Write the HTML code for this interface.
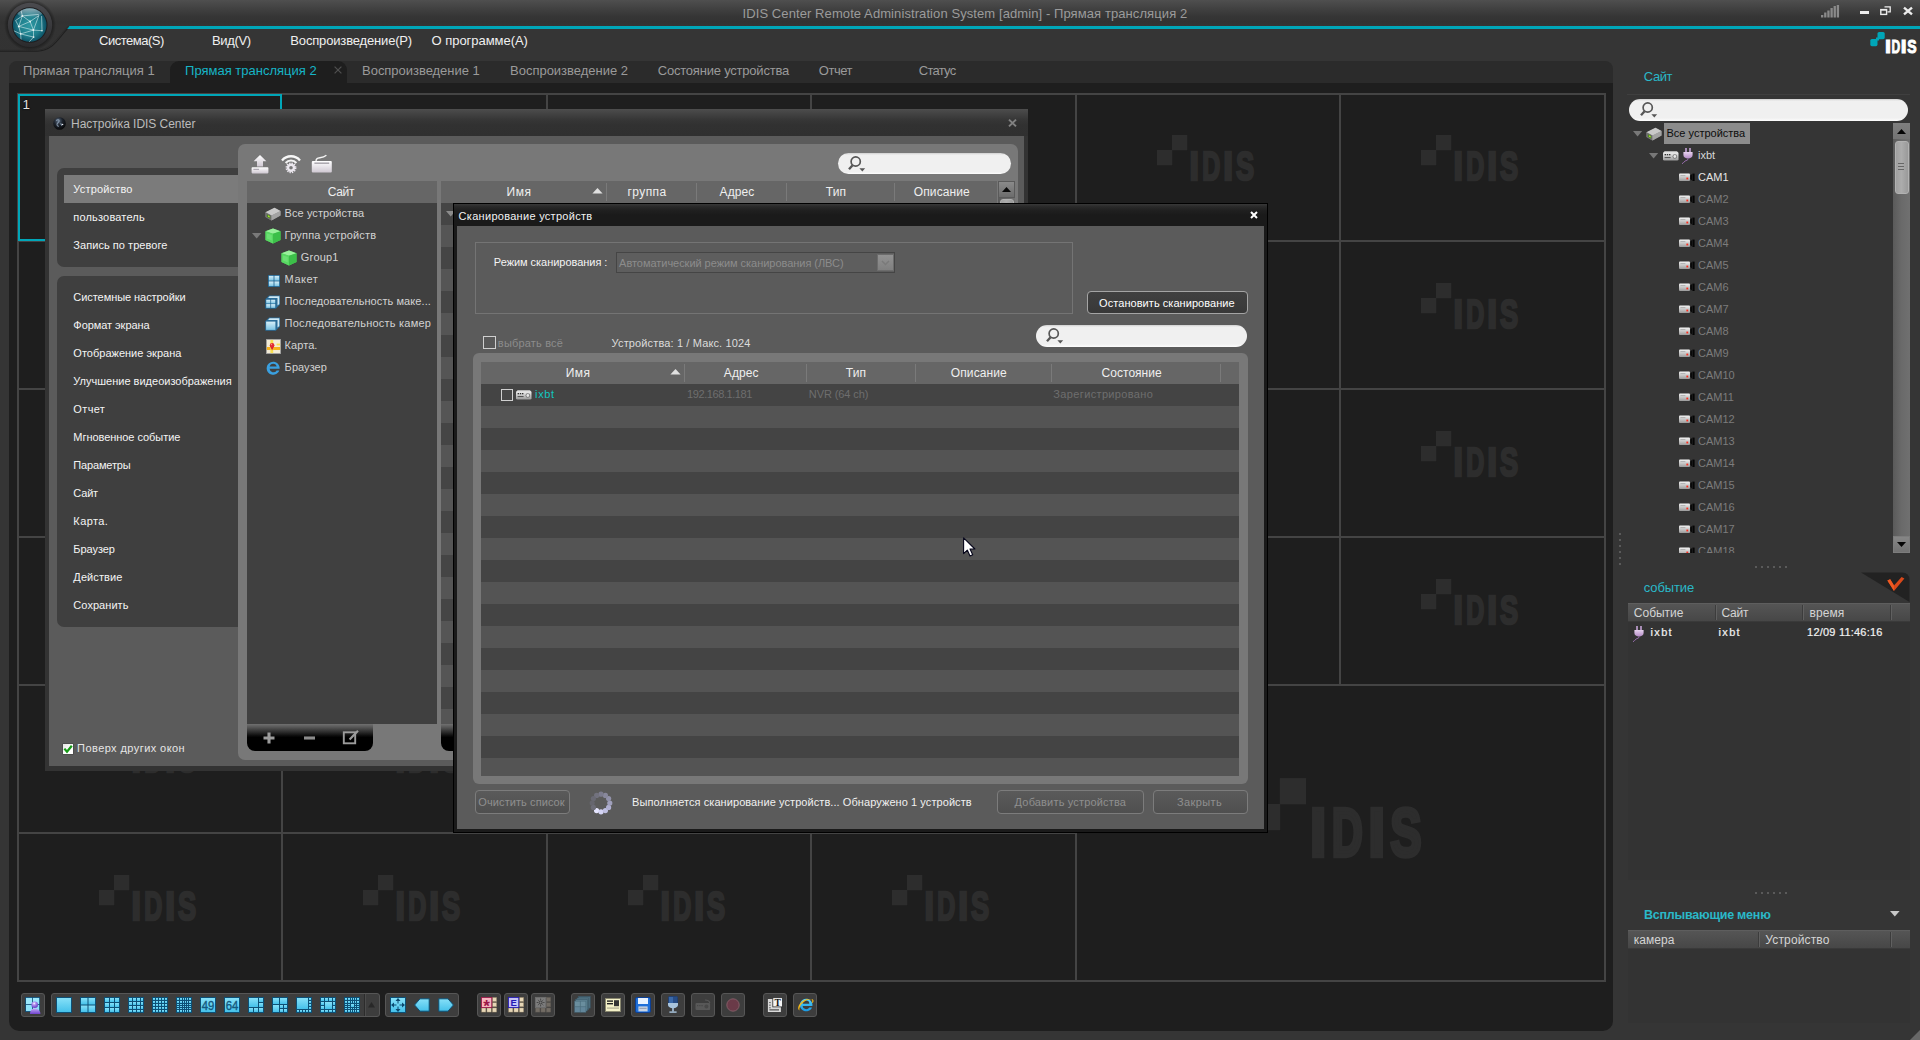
<!DOCTYPE html>
<html lang="ru"><head><meta charset="utf-8"><title>IDIS Center Remote Administration System</title>
<style>
*{box-sizing:border-box;margin:0;padding:0}
html,body{width:1920px;height:1040px;overflow:hidden}
body{background:#353535;font-family:"Liberation Sans",sans-serif;font-size:11px;color:#e6e6e6;position:relative}
.t{position:absolute;white-space:nowrap;line-height:16px;height:16px}
svg{overflow:visible}

</style></head>
<body>
<svg width="0" height="0" style="position:absolute"><defs>
<linearGradient id="gCy" x1="0" y1="0" x2="0" y2="1"><stop offset="0" stop-color="#86e0f8"/><stop offset="1" stop-color="#45c1ea"/></linearGradient>
<linearGradient id="gGrn" x1="0" y1="0" x2="0" y2="1"><stop offset="0" stop-color="#8df08f"/><stop offset="1" stop-color="#3fc94a"/></linearGradient>
<linearGradient id="gGry" x1="0" y1="0" x2="0" y2="1"><stop offset="0" stop-color="#f4f4f4"/><stop offset="1" stop-color="#9a9a9a"/></linearGradient>
<linearGradient id="gWh" x1="0" y1="0" x2="0" y2="1"><stop offset="0" stop-color="#ffffff"/><stop offset="1" stop-color="#cfc8d2"/></linearGradient>
<linearGradient id="gPur" x1="0" y1="0" x2="0" y2="1"><stop offset="0" stop-color="#e6d2ee"/><stop offset="1" stop-color="#b48ac6"/></linearGradient>
<linearGradient id="gBlu" x1="0" y1="0" x2="0" y2="1"><stop offset="0" stop-color="#d6eef8"/><stop offset="1" stop-color="#7cc4e4"/></linearGradient>
<radialGradient id="gOrb" cx="0.45" cy="0.35" r="0.7"><stop offset="0" stop-color="#4fb6c2"/><stop offset="0.55" stop-color="#1c8796"/><stop offset="1" stop-color="#0a4a58"/></radialGradient>
<radialGradient id="gRing" cx="0.5" cy="0.5" r="0.5"><stop offset="0.7" stop-color="#161616"/><stop offset="0.86" stop-color="#2a2a2a"/><stop offset="0.95" stop-color="#4a4a4a"/><stop offset="1" stop-color="#3a3a3a"/></radialGradient>
</defs></svg>
<div style="position:absolute;left:0px;top:0px;width:1920px;height:26px;background:linear-gradient(#4f4f4f 0%,#424242 30%,#363636 62%,#323232 85%,#353535 100%)"></div>
<svg style="position:absolute;left:0px;top:0px;" width="80" height="60" viewBox="0 0 80 60"><defs><linearGradient id="gPod" x1="0" y1="0" x2="0" y2="60" gradientUnits="userSpaceOnUse"><stop offset="0" stop-color="#4f4f4f"/><stop offset="0.13" stop-color="#424242"/><stop offset="0.27" stop-color="#363636"/><stop offset="0.37" stop-color="#323232"/><stop offset="0.433" stop-color="#333333"/><stop offset="1" stop-color="#323232"/></linearGradient></defs>
<path d="M0 0 H80 V26 H70 C59 36 55 50 37 51 H0 Z" fill="url(#gPod)"/>
<path d="M0 51.3 H37 C55 50.3 59 36.3 69.6 26.6" fill="none" stroke="#1f1f1f" stroke-width="1.1"/>
<path d="M0 50.3 H37 C54 49.3 58 35.3 68.6 26" fill="none" stroke="#2b2b2b" stroke-width="1"/></svg>
<svg style="position:absolute;left:60px;top:26px;" width="1860" height="3" viewBox="0 0 1860 3"><polygon points="9.5,0 1860,0 1860,3 7.2,3" fill="#00a6b8"/></svg>
<div class="t" style="left:742.54px;top:5.5px;font-size:13px;color:#9b9b9b;letter-spacing:0.087px;">IDIS Center Remote Administration System [admin] - Прямая трансляция 2</div>
<svg style="position:absolute;left:4px;top:-1px;" width="52" height="52" viewBox="0 0 52 52"><defs>
<radialGradient id="gSh" cx="0.5" cy="0.5" r="0.5"><stop offset="0.8" stop-color="#000" stop-opacity="0.5"/><stop offset="1" stop-color="#000" stop-opacity="0"/></radialGradient>
<linearGradient id="gRg" x1="0" y1="0" x2="0" y2="1"><stop offset="0" stop-color="#4b4b4f"/><stop offset="0.5" stop-color="#3a3a3d"/><stop offset="1" stop-color="#2b2b2d"/></linearGradient>
<radialGradient id="gGl" cx="0.5" cy="0.52" r="0.52"><stop offset="0" stop-color="#2f99a3"/><stop offset="0.6" stop-color="#1f7f8d"/><stop offset="1" stop-color="#0a4c61"/></radialGradient>
<linearGradient id="gHi" x1="0" y1="0" x2="0" y2="1"><stop offset="0" stop-color="#fff" stop-opacity="0.62"/><stop offset="1" stop-color="#fff" stop-opacity="0"/></linearGradient>
<clipPath id="cGl"><circle cx="25.7" cy="26" r="16.8"/></clipPath></defs>
<circle cx="26" cy="26" r="26" fill="url(#gSh)"/>
<circle cx="26" cy="25.9" r="22.2" fill="url(#gRg)"/>
<circle cx="25.7" cy="26" r="17.8" fill="#1d1d1f"/>
<circle cx="25.7" cy="26" r="16.8" fill="url(#gGl)"/>
<g clip-path="url(#cGl)"><g stroke="#d6ecee" stroke-width="0.75" fill="none" opacity="0.8" transform="translate(-4,1)">
<path d="M22.3 15.9 L30.1 21.5 L38.8 15.6 M22.3 15.9 L18.8 26.4 L30.1 21.5 L33.4 30.1 L38.8 15.6 M18.8 26.4 L33.4 30.1 L42 30.7 M33.4 30.1 L33.6 37.1 M20.7 33.9 L33.4 30.1 M20.7 33.9 L33.6 37.1 L29 42 M15.6 20.5 L22.3 15.9 L38.8 14.4 M15.6 20.5 L18.8 26.4 L20.7 33.9 L21 40 M41.6 16 L42 30.7 M12 30 L20.7 33.9 M22.3 15.9 L21 10"/>
</g><g fill="#eef8f8" opacity="0.9" transform="translate(-4,1)"><circle cx="22.3" cy="15.9" r="0.9"/><circle cx="30.1" cy="21.5" r="0.9"/><circle cx="18.8" cy="26.4" r="1"/><circle cx="33.4" cy="30.1" r="1"/><circle cx="42" cy="30.7" r="0.8"/><circle cx="20.7" cy="33.9" r="0.8"/><circle cx="33.6" cy="37.1" r="0.9"/></g>
<ellipse cx="25.7" cy="13.5" rx="12.5" ry="5.6" fill="url(#gHi)"/></g></svg>
<svg style="position:absolute;left:1821px;top:5px;" width="20" height="13" viewBox="0 0 20 13"><rect x="0.00" y="10.00" width="2.3" height="2.5" fill="#8a8a8a"/><rect x="3.15" y="7.50" width="2.3" height="5" fill="#8a8a8a"/><rect x="6.30" y="5.50" width="2.3" height="7" fill="#8a8a8a"/><rect x="9.45" y="3.00" width="2.3" height="9.5" fill="#8a8a8a"/><rect x="12.60" y="1.00" width="2.3" height="11.5" fill="#8a8a8a"/><rect x="15.75" y="0.00" width="2.3" height="12.5" fill="#8a8a8a"/></svg>
<div style="position:absolute;left:1860px;top:11px;width:9px;height:3px;background:#ececec"></div>
<svg style="position:absolute;left:1880px;top:6px;" width="12" height="10" viewBox="0 0 12 10"><path d="M4.5 0.8 H10.2 V5.8 H7.5" fill="none" stroke="#ececec" stroke-width="1.3"/><rect x="0.8" y="3.6" width="5.8" height="4.8" fill="none" stroke="#ececec" stroke-width="1.4"/><rect x="0.8" y="3.2" width="5.8" height="1.4" fill="#ececec"/></svg>
<svg style="position:absolute;left:1903px;top:7px;" width="10" height="8" viewBox="0 0 10 8"><path d="M1 0.6 L9 7.4 M9 0.6 L1 7.4" stroke="#ececec" stroke-width="2.4"/></svg>
<svg style="position:absolute;left:1869px;top:31px;" width="50" height="24" viewBox="0 0 50 24"><rect x="8.5" y="1" width="7.2" height="7.2" rx="1.6" fill="#00a6b8"/><rect x="1.3" y="8" width="7.2" height="7.2" rx="1.6" fill="#00a6b8"/><rect x="7" y="6.5" width="3" height="3" fill="#00a6b8"/>
<text x="15.96" y="21.5" font-family="Liberation Sans, sans-serif" font-weight="bold" font-size="19" fill="#fff" stroke="#fff" stroke-width="1.0" textLength="5.98" lengthAdjust="spacingAndGlyphs">I</text><text x="22.59" y="21.5" font-family="Liberation Sans, sans-serif" font-weight="bold" font-size="19" fill="#fff" stroke="#fff" stroke-width="1.0" textLength="8.71" lengthAdjust="spacingAndGlyphs">D</text><text x="31.71" y="21.5" font-family="Liberation Sans, sans-serif" font-weight="bold" font-size="19" fill="#fff" stroke="#fff" stroke-width="1.0" textLength="5.79" lengthAdjust="spacingAndGlyphs">I</text><text x="38.30" y="21.5" font-family="Liberation Sans, sans-serif" font-weight="bold" font-size="19" fill="#fff" stroke="#fff" stroke-width="1.0" textLength="9.35" lengthAdjust="spacingAndGlyphs">S</text></svg>
<div class="t" style="left:99.05px;top:33px;font-size:13px;color:#f0f0f0;letter-spacing:-0.503px;">Система(S)</div>
<div class="t" style="left:212.04px;top:33px;font-size:13px;color:#f0f0f0;letter-spacing:-0.338px;">Вид(V)</div>
<div class="t" style="left:290.30px;top:33px;font-size:13px;color:#f0f0f0;letter-spacing:-0.161px;">Воспроизведение(P)</div>
<div class="t" style="left:431.55px;top:33px;font-size:13px;color:#f0f0f0;letter-spacing:-0.035px;">О программе(A)</div>
<div style="position:absolute;left:9px;top:61px;width:1604px;height:24px;background:#2b2b2b;border-radius:8px 8px 0 0"></div>
<div style="position:absolute;left:9px;top:83px;width:1604px;height:948px;background:#1e1e1e;border-radius:0 0 10px 10px"></div>
<div style="position:absolute;left:170px;top:61px;width:177px;height:24px;background:#1e1e1e;border-radius:9px 9px 0 0"></div>
<div class="t" style="left:23.05px;top:63px;font-size:13px;color:#9a9a9a;letter-spacing:0.004px;">Прямая трансляция 1</div>
<div class="t" style="left:185.04px;top:63px;font-size:13px;color:#16b4c6;letter-spacing:0.004px;">Прямая трансляция 2</div>
<div class="t" style="left:362.05px;top:63px;font-size:13px;color:#9a9a9a;letter-spacing:-0.031px;">Воспроизведение 1</div>
<div class="t" style="left:510.05px;top:63px;font-size:13px;color:#9a9a9a;letter-spacing:-0.015px;">Воспроизведение 2</div>
<div class="t" style="left:657.79px;top:63px;font-size:13px;color:#9a9a9a;letter-spacing:-0.213px;">Состояние устройства</div>
<div class="t" style="left:818.79px;top:63px;font-size:13px;color:#9a9a9a;letter-spacing:-0.483px;">Отчет</div>
<div class="t" style="left:918.79px;top:63px;font-size:13px;color:#9a9a9a;letter-spacing:-0.737px;">Статус</div>
<svg style="position:absolute;left:334px;top:66px;" width="8" height="8" viewBox="0 0 8 8"><path d="M0.6 0.6 L7.4 7.4 M7.4 0.6 L0.6 7.4" stroke="#505050" stroke-width="1.2"/></svg>
<div style="position:absolute;left:17px;top:93px;width:1589px;height:2px;background:#444444"></div>
<div style="position:absolute;left:17px;top:240px;width:1589px;height:2px;background:#444444"></div>
<div style="position:absolute;left:17px;top:388px;width:1589px;height:2px;background:#444444"></div>
<div style="position:absolute;left:17px;top:536px;width:1589px;height:2px;background:#444444"></div>
<div style="position:absolute;left:17px;top:684px;width:1589px;height:2px;background:#444444"></div>
<div style="position:absolute;left:17px;top:832px;width:1589px;height:2px;background:#444444"></div>
<div style="position:absolute;left:17px;top:980px;width:1589px;height:2px;background:#444444"></div>
<div style="position:absolute;left:17px;top:93px;width:2px;height:889px;background:#444444"></div>
<div style="position:absolute;left:281px;top:93px;width:2px;height:889px;background:#444444"></div>
<div style="position:absolute;left:546px;top:93px;width:2px;height:889px;background:#444444"></div>
<div style="position:absolute;left:810px;top:93px;width:2px;height:889px;background:#444444"></div>
<div style="position:absolute;left:1075px;top:93px;width:2px;height:889px;background:#444444"></div>
<div style="position:absolute;left:1339px;top:93px;width:2px;height:889px;background:#444444"></div>
<div style="position:absolute;left:1604px;top:93px;width:2px;height:889px;background:#444444"></div>
<div style="position:absolute;left:1077px;top:686px;width:527px;height:294px;background:#1e1e1e"></div>
<svg style="position:absolute;left:99px;top:135px;" width="98" height="48" viewBox="0 0 98 48"><rect x="15" y="0" width="15.2" height="15.2" fill="#2d2d2d"/><rect x="0" y="15" width="15.2" height="15.2" fill="#2d2d2d"/><text x="32.52" y="45.4" font-family="Liberation Sans, sans-serif" font-weight="bold" font-size="40" fill="#2d2d2d" stroke="#2d2d2d" stroke-width="2.6" textLength="9.45" lengthAdjust="spacingAndGlyphs">I</text><text x="45.13" y="45.4" font-family="Liberation Sans, sans-serif" font-weight="bold" font-size="40" fill="#2d2d2d" stroke="#2d2d2d" stroke-width="2.6" textLength="18.02" lengthAdjust="spacingAndGlyphs">D</text><text x="66.23" y="45.4" font-family="Liberation Sans, sans-serif" font-weight="bold" font-size="40" fill="#2d2d2d" stroke="#2d2d2d" stroke-width="2.6" textLength="9.84" lengthAdjust="spacingAndGlyphs">I</text><text x="79.02" y="45.4" font-family="Liberation Sans, sans-serif" font-weight="bold" font-size="40" fill="#2d2d2d" stroke="#2d2d2d" stroke-width="2.6" textLength="18.15" lengthAdjust="spacingAndGlyphs">S</text></svg>
<svg style="position:absolute;left:363px;top:135px;" width="98" height="48" viewBox="0 0 98 48"><rect x="15" y="0" width="15.2" height="15.2" fill="#2d2d2d"/><rect x="0" y="15" width="15.2" height="15.2" fill="#2d2d2d"/><text x="32.52" y="45.4" font-family="Liberation Sans, sans-serif" font-weight="bold" font-size="40" fill="#2d2d2d" stroke="#2d2d2d" stroke-width="2.6" textLength="9.45" lengthAdjust="spacingAndGlyphs">I</text><text x="45.13" y="45.4" font-family="Liberation Sans, sans-serif" font-weight="bold" font-size="40" fill="#2d2d2d" stroke="#2d2d2d" stroke-width="2.6" textLength="18.02" lengthAdjust="spacingAndGlyphs">D</text><text x="66.23" y="45.4" font-family="Liberation Sans, sans-serif" font-weight="bold" font-size="40" fill="#2d2d2d" stroke="#2d2d2d" stroke-width="2.6" textLength="9.84" lengthAdjust="spacingAndGlyphs">I</text><text x="79.02" y="45.4" font-family="Liberation Sans, sans-serif" font-weight="bold" font-size="40" fill="#2d2d2d" stroke="#2d2d2d" stroke-width="2.6" textLength="18.15" lengthAdjust="spacingAndGlyphs">S</text></svg>
<svg style="position:absolute;left:628px;top:135px;" width="98" height="48" viewBox="0 0 98 48"><rect x="15" y="0" width="15.2" height="15.2" fill="#2d2d2d"/><rect x="0" y="15" width="15.2" height="15.2" fill="#2d2d2d"/><text x="32.52" y="45.4" font-family="Liberation Sans, sans-serif" font-weight="bold" font-size="40" fill="#2d2d2d" stroke="#2d2d2d" stroke-width="2.6" textLength="9.45" lengthAdjust="spacingAndGlyphs">I</text><text x="45.13" y="45.4" font-family="Liberation Sans, sans-serif" font-weight="bold" font-size="40" fill="#2d2d2d" stroke="#2d2d2d" stroke-width="2.6" textLength="18.02" lengthAdjust="spacingAndGlyphs">D</text><text x="66.23" y="45.4" font-family="Liberation Sans, sans-serif" font-weight="bold" font-size="40" fill="#2d2d2d" stroke="#2d2d2d" stroke-width="2.6" textLength="9.84" lengthAdjust="spacingAndGlyphs">I</text><text x="79.02" y="45.4" font-family="Liberation Sans, sans-serif" font-weight="bold" font-size="40" fill="#2d2d2d" stroke="#2d2d2d" stroke-width="2.6" textLength="18.15" lengthAdjust="spacingAndGlyphs">S</text></svg>
<svg style="position:absolute;left:892px;top:135px;" width="98" height="48" viewBox="0 0 98 48"><rect x="15" y="0" width="15.2" height="15.2" fill="#2d2d2d"/><rect x="0" y="15" width="15.2" height="15.2" fill="#2d2d2d"/><text x="32.52" y="45.4" font-family="Liberation Sans, sans-serif" font-weight="bold" font-size="40" fill="#2d2d2d" stroke="#2d2d2d" stroke-width="2.6" textLength="9.45" lengthAdjust="spacingAndGlyphs">I</text><text x="45.13" y="45.4" font-family="Liberation Sans, sans-serif" font-weight="bold" font-size="40" fill="#2d2d2d" stroke="#2d2d2d" stroke-width="2.6" textLength="18.02" lengthAdjust="spacingAndGlyphs">D</text><text x="66.23" y="45.4" font-family="Liberation Sans, sans-serif" font-weight="bold" font-size="40" fill="#2d2d2d" stroke="#2d2d2d" stroke-width="2.6" textLength="9.84" lengthAdjust="spacingAndGlyphs">I</text><text x="79.02" y="45.4" font-family="Liberation Sans, sans-serif" font-weight="bold" font-size="40" fill="#2d2d2d" stroke="#2d2d2d" stroke-width="2.6" textLength="18.15" lengthAdjust="spacingAndGlyphs">S</text></svg>
<svg style="position:absolute;left:1157px;top:135px;" width="98" height="48" viewBox="0 0 98 48"><rect x="15" y="0" width="15.2" height="15.2" fill="#2d2d2d"/><rect x="0" y="15" width="15.2" height="15.2" fill="#2d2d2d"/><text x="32.52" y="45.4" font-family="Liberation Sans, sans-serif" font-weight="bold" font-size="40" fill="#2d2d2d" stroke="#2d2d2d" stroke-width="2.6" textLength="9.45" lengthAdjust="spacingAndGlyphs">I</text><text x="45.13" y="45.4" font-family="Liberation Sans, sans-serif" font-weight="bold" font-size="40" fill="#2d2d2d" stroke="#2d2d2d" stroke-width="2.6" textLength="18.02" lengthAdjust="spacingAndGlyphs">D</text><text x="66.23" y="45.4" font-family="Liberation Sans, sans-serif" font-weight="bold" font-size="40" fill="#2d2d2d" stroke="#2d2d2d" stroke-width="2.6" textLength="9.84" lengthAdjust="spacingAndGlyphs">I</text><text x="79.02" y="45.4" font-family="Liberation Sans, sans-serif" font-weight="bold" font-size="40" fill="#2d2d2d" stroke="#2d2d2d" stroke-width="2.6" textLength="18.15" lengthAdjust="spacingAndGlyphs">S</text></svg>
<svg style="position:absolute;left:1421px;top:135px;" width="98" height="48" viewBox="0 0 98 48"><rect x="15" y="0" width="15.2" height="15.2" fill="#2d2d2d"/><rect x="0" y="15" width="15.2" height="15.2" fill="#2d2d2d"/><text x="32.52" y="45.4" font-family="Liberation Sans, sans-serif" font-weight="bold" font-size="40" fill="#2d2d2d" stroke="#2d2d2d" stroke-width="2.6" textLength="9.45" lengthAdjust="spacingAndGlyphs">I</text><text x="45.13" y="45.4" font-family="Liberation Sans, sans-serif" font-weight="bold" font-size="40" fill="#2d2d2d" stroke="#2d2d2d" stroke-width="2.6" textLength="18.02" lengthAdjust="spacingAndGlyphs">D</text><text x="66.23" y="45.4" font-family="Liberation Sans, sans-serif" font-weight="bold" font-size="40" fill="#2d2d2d" stroke="#2d2d2d" stroke-width="2.6" textLength="9.84" lengthAdjust="spacingAndGlyphs">I</text><text x="79.02" y="45.4" font-family="Liberation Sans, sans-serif" font-weight="bold" font-size="40" fill="#2d2d2d" stroke="#2d2d2d" stroke-width="2.6" textLength="18.15" lengthAdjust="spacingAndGlyphs">S</text></svg>
<svg style="position:absolute;left:99px;top:283px;" width="98" height="48" viewBox="0 0 98 48"><rect x="15" y="0" width="15.2" height="15.2" fill="#2d2d2d"/><rect x="0" y="15" width="15.2" height="15.2" fill="#2d2d2d"/><text x="32.52" y="45.4" font-family="Liberation Sans, sans-serif" font-weight="bold" font-size="40" fill="#2d2d2d" stroke="#2d2d2d" stroke-width="2.6" textLength="9.45" lengthAdjust="spacingAndGlyphs">I</text><text x="45.13" y="45.4" font-family="Liberation Sans, sans-serif" font-weight="bold" font-size="40" fill="#2d2d2d" stroke="#2d2d2d" stroke-width="2.6" textLength="18.02" lengthAdjust="spacingAndGlyphs">D</text><text x="66.23" y="45.4" font-family="Liberation Sans, sans-serif" font-weight="bold" font-size="40" fill="#2d2d2d" stroke="#2d2d2d" stroke-width="2.6" textLength="9.84" lengthAdjust="spacingAndGlyphs">I</text><text x="79.02" y="45.4" font-family="Liberation Sans, sans-serif" font-weight="bold" font-size="40" fill="#2d2d2d" stroke="#2d2d2d" stroke-width="2.6" textLength="18.15" lengthAdjust="spacingAndGlyphs">S</text></svg>
<svg style="position:absolute;left:363px;top:283px;" width="98" height="48" viewBox="0 0 98 48"><rect x="15" y="0" width="15.2" height="15.2" fill="#2d2d2d"/><rect x="0" y="15" width="15.2" height="15.2" fill="#2d2d2d"/><text x="32.52" y="45.4" font-family="Liberation Sans, sans-serif" font-weight="bold" font-size="40" fill="#2d2d2d" stroke="#2d2d2d" stroke-width="2.6" textLength="9.45" lengthAdjust="spacingAndGlyphs">I</text><text x="45.13" y="45.4" font-family="Liberation Sans, sans-serif" font-weight="bold" font-size="40" fill="#2d2d2d" stroke="#2d2d2d" stroke-width="2.6" textLength="18.02" lengthAdjust="spacingAndGlyphs">D</text><text x="66.23" y="45.4" font-family="Liberation Sans, sans-serif" font-weight="bold" font-size="40" fill="#2d2d2d" stroke="#2d2d2d" stroke-width="2.6" textLength="9.84" lengthAdjust="spacingAndGlyphs">I</text><text x="79.02" y="45.4" font-family="Liberation Sans, sans-serif" font-weight="bold" font-size="40" fill="#2d2d2d" stroke="#2d2d2d" stroke-width="2.6" textLength="18.15" lengthAdjust="spacingAndGlyphs">S</text></svg>
<svg style="position:absolute;left:628px;top:283px;" width="98" height="48" viewBox="0 0 98 48"><rect x="15" y="0" width="15.2" height="15.2" fill="#2d2d2d"/><rect x="0" y="15" width="15.2" height="15.2" fill="#2d2d2d"/><text x="32.52" y="45.4" font-family="Liberation Sans, sans-serif" font-weight="bold" font-size="40" fill="#2d2d2d" stroke="#2d2d2d" stroke-width="2.6" textLength="9.45" lengthAdjust="spacingAndGlyphs">I</text><text x="45.13" y="45.4" font-family="Liberation Sans, sans-serif" font-weight="bold" font-size="40" fill="#2d2d2d" stroke="#2d2d2d" stroke-width="2.6" textLength="18.02" lengthAdjust="spacingAndGlyphs">D</text><text x="66.23" y="45.4" font-family="Liberation Sans, sans-serif" font-weight="bold" font-size="40" fill="#2d2d2d" stroke="#2d2d2d" stroke-width="2.6" textLength="9.84" lengthAdjust="spacingAndGlyphs">I</text><text x="79.02" y="45.4" font-family="Liberation Sans, sans-serif" font-weight="bold" font-size="40" fill="#2d2d2d" stroke="#2d2d2d" stroke-width="2.6" textLength="18.15" lengthAdjust="spacingAndGlyphs">S</text></svg>
<svg style="position:absolute;left:892px;top:283px;" width="98" height="48" viewBox="0 0 98 48"><rect x="15" y="0" width="15.2" height="15.2" fill="#2d2d2d"/><rect x="0" y="15" width="15.2" height="15.2" fill="#2d2d2d"/><text x="32.52" y="45.4" font-family="Liberation Sans, sans-serif" font-weight="bold" font-size="40" fill="#2d2d2d" stroke="#2d2d2d" stroke-width="2.6" textLength="9.45" lengthAdjust="spacingAndGlyphs">I</text><text x="45.13" y="45.4" font-family="Liberation Sans, sans-serif" font-weight="bold" font-size="40" fill="#2d2d2d" stroke="#2d2d2d" stroke-width="2.6" textLength="18.02" lengthAdjust="spacingAndGlyphs">D</text><text x="66.23" y="45.4" font-family="Liberation Sans, sans-serif" font-weight="bold" font-size="40" fill="#2d2d2d" stroke="#2d2d2d" stroke-width="2.6" textLength="9.84" lengthAdjust="spacingAndGlyphs">I</text><text x="79.02" y="45.4" font-family="Liberation Sans, sans-serif" font-weight="bold" font-size="40" fill="#2d2d2d" stroke="#2d2d2d" stroke-width="2.6" textLength="18.15" lengthAdjust="spacingAndGlyphs">S</text></svg>
<svg style="position:absolute;left:1157px;top:283px;" width="98" height="48" viewBox="0 0 98 48"><rect x="15" y="0" width="15.2" height="15.2" fill="#2d2d2d"/><rect x="0" y="15" width="15.2" height="15.2" fill="#2d2d2d"/><text x="32.52" y="45.4" font-family="Liberation Sans, sans-serif" font-weight="bold" font-size="40" fill="#2d2d2d" stroke="#2d2d2d" stroke-width="2.6" textLength="9.45" lengthAdjust="spacingAndGlyphs">I</text><text x="45.13" y="45.4" font-family="Liberation Sans, sans-serif" font-weight="bold" font-size="40" fill="#2d2d2d" stroke="#2d2d2d" stroke-width="2.6" textLength="18.02" lengthAdjust="spacingAndGlyphs">D</text><text x="66.23" y="45.4" font-family="Liberation Sans, sans-serif" font-weight="bold" font-size="40" fill="#2d2d2d" stroke="#2d2d2d" stroke-width="2.6" textLength="9.84" lengthAdjust="spacingAndGlyphs">I</text><text x="79.02" y="45.4" font-family="Liberation Sans, sans-serif" font-weight="bold" font-size="40" fill="#2d2d2d" stroke="#2d2d2d" stroke-width="2.6" textLength="18.15" lengthAdjust="spacingAndGlyphs">S</text></svg>
<svg style="position:absolute;left:1421px;top:283px;" width="98" height="48" viewBox="0 0 98 48"><rect x="15" y="0" width="15.2" height="15.2" fill="#2d2d2d"/><rect x="0" y="15" width="15.2" height="15.2" fill="#2d2d2d"/><text x="32.52" y="45.4" font-family="Liberation Sans, sans-serif" font-weight="bold" font-size="40" fill="#2d2d2d" stroke="#2d2d2d" stroke-width="2.6" textLength="9.45" lengthAdjust="spacingAndGlyphs">I</text><text x="45.13" y="45.4" font-family="Liberation Sans, sans-serif" font-weight="bold" font-size="40" fill="#2d2d2d" stroke="#2d2d2d" stroke-width="2.6" textLength="18.02" lengthAdjust="spacingAndGlyphs">D</text><text x="66.23" y="45.4" font-family="Liberation Sans, sans-serif" font-weight="bold" font-size="40" fill="#2d2d2d" stroke="#2d2d2d" stroke-width="2.6" textLength="9.84" lengthAdjust="spacingAndGlyphs">I</text><text x="79.02" y="45.4" font-family="Liberation Sans, sans-serif" font-weight="bold" font-size="40" fill="#2d2d2d" stroke="#2d2d2d" stroke-width="2.6" textLength="18.15" lengthAdjust="spacingAndGlyphs">S</text></svg>
<svg style="position:absolute;left:99px;top:431px;" width="98" height="48" viewBox="0 0 98 48"><rect x="15" y="0" width="15.2" height="15.2" fill="#2d2d2d"/><rect x="0" y="15" width="15.2" height="15.2" fill="#2d2d2d"/><text x="32.52" y="45.4" font-family="Liberation Sans, sans-serif" font-weight="bold" font-size="40" fill="#2d2d2d" stroke="#2d2d2d" stroke-width="2.6" textLength="9.45" lengthAdjust="spacingAndGlyphs">I</text><text x="45.13" y="45.4" font-family="Liberation Sans, sans-serif" font-weight="bold" font-size="40" fill="#2d2d2d" stroke="#2d2d2d" stroke-width="2.6" textLength="18.02" lengthAdjust="spacingAndGlyphs">D</text><text x="66.23" y="45.4" font-family="Liberation Sans, sans-serif" font-weight="bold" font-size="40" fill="#2d2d2d" stroke="#2d2d2d" stroke-width="2.6" textLength="9.84" lengthAdjust="spacingAndGlyphs">I</text><text x="79.02" y="45.4" font-family="Liberation Sans, sans-serif" font-weight="bold" font-size="40" fill="#2d2d2d" stroke="#2d2d2d" stroke-width="2.6" textLength="18.15" lengthAdjust="spacingAndGlyphs">S</text></svg>
<svg style="position:absolute;left:363px;top:431px;" width="98" height="48" viewBox="0 0 98 48"><rect x="15" y="0" width="15.2" height="15.2" fill="#2d2d2d"/><rect x="0" y="15" width="15.2" height="15.2" fill="#2d2d2d"/><text x="32.52" y="45.4" font-family="Liberation Sans, sans-serif" font-weight="bold" font-size="40" fill="#2d2d2d" stroke="#2d2d2d" stroke-width="2.6" textLength="9.45" lengthAdjust="spacingAndGlyphs">I</text><text x="45.13" y="45.4" font-family="Liberation Sans, sans-serif" font-weight="bold" font-size="40" fill="#2d2d2d" stroke="#2d2d2d" stroke-width="2.6" textLength="18.02" lengthAdjust="spacingAndGlyphs">D</text><text x="66.23" y="45.4" font-family="Liberation Sans, sans-serif" font-weight="bold" font-size="40" fill="#2d2d2d" stroke="#2d2d2d" stroke-width="2.6" textLength="9.84" lengthAdjust="spacingAndGlyphs">I</text><text x="79.02" y="45.4" font-family="Liberation Sans, sans-serif" font-weight="bold" font-size="40" fill="#2d2d2d" stroke="#2d2d2d" stroke-width="2.6" textLength="18.15" lengthAdjust="spacingAndGlyphs">S</text></svg>
<svg style="position:absolute;left:628px;top:431px;" width="98" height="48" viewBox="0 0 98 48"><rect x="15" y="0" width="15.2" height="15.2" fill="#2d2d2d"/><rect x="0" y="15" width="15.2" height="15.2" fill="#2d2d2d"/><text x="32.52" y="45.4" font-family="Liberation Sans, sans-serif" font-weight="bold" font-size="40" fill="#2d2d2d" stroke="#2d2d2d" stroke-width="2.6" textLength="9.45" lengthAdjust="spacingAndGlyphs">I</text><text x="45.13" y="45.4" font-family="Liberation Sans, sans-serif" font-weight="bold" font-size="40" fill="#2d2d2d" stroke="#2d2d2d" stroke-width="2.6" textLength="18.02" lengthAdjust="spacingAndGlyphs">D</text><text x="66.23" y="45.4" font-family="Liberation Sans, sans-serif" font-weight="bold" font-size="40" fill="#2d2d2d" stroke="#2d2d2d" stroke-width="2.6" textLength="9.84" lengthAdjust="spacingAndGlyphs">I</text><text x="79.02" y="45.4" font-family="Liberation Sans, sans-serif" font-weight="bold" font-size="40" fill="#2d2d2d" stroke="#2d2d2d" stroke-width="2.6" textLength="18.15" lengthAdjust="spacingAndGlyphs">S</text></svg>
<svg style="position:absolute;left:892px;top:431px;" width="98" height="48" viewBox="0 0 98 48"><rect x="15" y="0" width="15.2" height="15.2" fill="#2d2d2d"/><rect x="0" y="15" width="15.2" height="15.2" fill="#2d2d2d"/><text x="32.52" y="45.4" font-family="Liberation Sans, sans-serif" font-weight="bold" font-size="40" fill="#2d2d2d" stroke="#2d2d2d" stroke-width="2.6" textLength="9.45" lengthAdjust="spacingAndGlyphs">I</text><text x="45.13" y="45.4" font-family="Liberation Sans, sans-serif" font-weight="bold" font-size="40" fill="#2d2d2d" stroke="#2d2d2d" stroke-width="2.6" textLength="18.02" lengthAdjust="spacingAndGlyphs">D</text><text x="66.23" y="45.4" font-family="Liberation Sans, sans-serif" font-weight="bold" font-size="40" fill="#2d2d2d" stroke="#2d2d2d" stroke-width="2.6" textLength="9.84" lengthAdjust="spacingAndGlyphs">I</text><text x="79.02" y="45.4" font-family="Liberation Sans, sans-serif" font-weight="bold" font-size="40" fill="#2d2d2d" stroke="#2d2d2d" stroke-width="2.6" textLength="18.15" lengthAdjust="spacingAndGlyphs">S</text></svg>
<svg style="position:absolute;left:1157px;top:431px;" width="98" height="48" viewBox="0 0 98 48"><rect x="15" y="0" width="15.2" height="15.2" fill="#2d2d2d"/><rect x="0" y="15" width="15.2" height="15.2" fill="#2d2d2d"/><text x="32.52" y="45.4" font-family="Liberation Sans, sans-serif" font-weight="bold" font-size="40" fill="#2d2d2d" stroke="#2d2d2d" stroke-width="2.6" textLength="9.45" lengthAdjust="spacingAndGlyphs">I</text><text x="45.13" y="45.4" font-family="Liberation Sans, sans-serif" font-weight="bold" font-size="40" fill="#2d2d2d" stroke="#2d2d2d" stroke-width="2.6" textLength="18.02" lengthAdjust="spacingAndGlyphs">D</text><text x="66.23" y="45.4" font-family="Liberation Sans, sans-serif" font-weight="bold" font-size="40" fill="#2d2d2d" stroke="#2d2d2d" stroke-width="2.6" textLength="9.84" lengthAdjust="spacingAndGlyphs">I</text><text x="79.02" y="45.4" font-family="Liberation Sans, sans-serif" font-weight="bold" font-size="40" fill="#2d2d2d" stroke="#2d2d2d" stroke-width="2.6" textLength="18.15" lengthAdjust="spacingAndGlyphs">S</text></svg>
<svg style="position:absolute;left:1421px;top:431px;" width="98" height="48" viewBox="0 0 98 48"><rect x="15" y="0" width="15.2" height="15.2" fill="#2d2d2d"/><rect x="0" y="15" width="15.2" height="15.2" fill="#2d2d2d"/><text x="32.52" y="45.4" font-family="Liberation Sans, sans-serif" font-weight="bold" font-size="40" fill="#2d2d2d" stroke="#2d2d2d" stroke-width="2.6" textLength="9.45" lengthAdjust="spacingAndGlyphs">I</text><text x="45.13" y="45.4" font-family="Liberation Sans, sans-serif" font-weight="bold" font-size="40" fill="#2d2d2d" stroke="#2d2d2d" stroke-width="2.6" textLength="18.02" lengthAdjust="spacingAndGlyphs">D</text><text x="66.23" y="45.4" font-family="Liberation Sans, sans-serif" font-weight="bold" font-size="40" fill="#2d2d2d" stroke="#2d2d2d" stroke-width="2.6" textLength="9.84" lengthAdjust="spacingAndGlyphs">I</text><text x="79.02" y="45.4" font-family="Liberation Sans, sans-serif" font-weight="bold" font-size="40" fill="#2d2d2d" stroke="#2d2d2d" stroke-width="2.6" textLength="18.15" lengthAdjust="spacingAndGlyphs">S</text></svg>
<svg style="position:absolute;left:99px;top:579px;" width="98" height="48" viewBox="0 0 98 48"><rect x="15" y="0" width="15.2" height="15.2" fill="#2d2d2d"/><rect x="0" y="15" width="15.2" height="15.2" fill="#2d2d2d"/><text x="32.52" y="45.4" font-family="Liberation Sans, sans-serif" font-weight="bold" font-size="40" fill="#2d2d2d" stroke="#2d2d2d" stroke-width="2.6" textLength="9.45" lengthAdjust="spacingAndGlyphs">I</text><text x="45.13" y="45.4" font-family="Liberation Sans, sans-serif" font-weight="bold" font-size="40" fill="#2d2d2d" stroke="#2d2d2d" stroke-width="2.6" textLength="18.02" lengthAdjust="spacingAndGlyphs">D</text><text x="66.23" y="45.4" font-family="Liberation Sans, sans-serif" font-weight="bold" font-size="40" fill="#2d2d2d" stroke="#2d2d2d" stroke-width="2.6" textLength="9.84" lengthAdjust="spacingAndGlyphs">I</text><text x="79.02" y="45.4" font-family="Liberation Sans, sans-serif" font-weight="bold" font-size="40" fill="#2d2d2d" stroke="#2d2d2d" stroke-width="2.6" textLength="18.15" lengthAdjust="spacingAndGlyphs">S</text></svg>
<svg style="position:absolute;left:363px;top:579px;" width="98" height="48" viewBox="0 0 98 48"><rect x="15" y="0" width="15.2" height="15.2" fill="#2d2d2d"/><rect x="0" y="15" width="15.2" height="15.2" fill="#2d2d2d"/><text x="32.52" y="45.4" font-family="Liberation Sans, sans-serif" font-weight="bold" font-size="40" fill="#2d2d2d" stroke="#2d2d2d" stroke-width="2.6" textLength="9.45" lengthAdjust="spacingAndGlyphs">I</text><text x="45.13" y="45.4" font-family="Liberation Sans, sans-serif" font-weight="bold" font-size="40" fill="#2d2d2d" stroke="#2d2d2d" stroke-width="2.6" textLength="18.02" lengthAdjust="spacingAndGlyphs">D</text><text x="66.23" y="45.4" font-family="Liberation Sans, sans-serif" font-weight="bold" font-size="40" fill="#2d2d2d" stroke="#2d2d2d" stroke-width="2.6" textLength="9.84" lengthAdjust="spacingAndGlyphs">I</text><text x="79.02" y="45.4" font-family="Liberation Sans, sans-serif" font-weight="bold" font-size="40" fill="#2d2d2d" stroke="#2d2d2d" stroke-width="2.6" textLength="18.15" lengthAdjust="spacingAndGlyphs">S</text></svg>
<svg style="position:absolute;left:628px;top:579px;" width="98" height="48" viewBox="0 0 98 48"><rect x="15" y="0" width="15.2" height="15.2" fill="#2d2d2d"/><rect x="0" y="15" width="15.2" height="15.2" fill="#2d2d2d"/><text x="32.52" y="45.4" font-family="Liberation Sans, sans-serif" font-weight="bold" font-size="40" fill="#2d2d2d" stroke="#2d2d2d" stroke-width="2.6" textLength="9.45" lengthAdjust="spacingAndGlyphs">I</text><text x="45.13" y="45.4" font-family="Liberation Sans, sans-serif" font-weight="bold" font-size="40" fill="#2d2d2d" stroke="#2d2d2d" stroke-width="2.6" textLength="18.02" lengthAdjust="spacingAndGlyphs">D</text><text x="66.23" y="45.4" font-family="Liberation Sans, sans-serif" font-weight="bold" font-size="40" fill="#2d2d2d" stroke="#2d2d2d" stroke-width="2.6" textLength="9.84" lengthAdjust="spacingAndGlyphs">I</text><text x="79.02" y="45.4" font-family="Liberation Sans, sans-serif" font-weight="bold" font-size="40" fill="#2d2d2d" stroke="#2d2d2d" stroke-width="2.6" textLength="18.15" lengthAdjust="spacingAndGlyphs">S</text></svg>
<svg style="position:absolute;left:892px;top:579px;" width="98" height="48" viewBox="0 0 98 48"><rect x="15" y="0" width="15.2" height="15.2" fill="#2d2d2d"/><rect x="0" y="15" width="15.2" height="15.2" fill="#2d2d2d"/><text x="32.52" y="45.4" font-family="Liberation Sans, sans-serif" font-weight="bold" font-size="40" fill="#2d2d2d" stroke="#2d2d2d" stroke-width="2.6" textLength="9.45" lengthAdjust="spacingAndGlyphs">I</text><text x="45.13" y="45.4" font-family="Liberation Sans, sans-serif" font-weight="bold" font-size="40" fill="#2d2d2d" stroke="#2d2d2d" stroke-width="2.6" textLength="18.02" lengthAdjust="spacingAndGlyphs">D</text><text x="66.23" y="45.4" font-family="Liberation Sans, sans-serif" font-weight="bold" font-size="40" fill="#2d2d2d" stroke="#2d2d2d" stroke-width="2.6" textLength="9.84" lengthAdjust="spacingAndGlyphs">I</text><text x="79.02" y="45.4" font-family="Liberation Sans, sans-serif" font-weight="bold" font-size="40" fill="#2d2d2d" stroke="#2d2d2d" stroke-width="2.6" textLength="18.15" lengthAdjust="spacingAndGlyphs">S</text></svg>
<svg style="position:absolute;left:1157px;top:579px;" width="98" height="48" viewBox="0 0 98 48"><rect x="15" y="0" width="15.2" height="15.2" fill="#2d2d2d"/><rect x="0" y="15" width="15.2" height="15.2" fill="#2d2d2d"/><text x="32.52" y="45.4" font-family="Liberation Sans, sans-serif" font-weight="bold" font-size="40" fill="#2d2d2d" stroke="#2d2d2d" stroke-width="2.6" textLength="9.45" lengthAdjust="spacingAndGlyphs">I</text><text x="45.13" y="45.4" font-family="Liberation Sans, sans-serif" font-weight="bold" font-size="40" fill="#2d2d2d" stroke="#2d2d2d" stroke-width="2.6" textLength="18.02" lengthAdjust="spacingAndGlyphs">D</text><text x="66.23" y="45.4" font-family="Liberation Sans, sans-serif" font-weight="bold" font-size="40" fill="#2d2d2d" stroke="#2d2d2d" stroke-width="2.6" textLength="9.84" lengthAdjust="spacingAndGlyphs">I</text><text x="79.02" y="45.4" font-family="Liberation Sans, sans-serif" font-weight="bold" font-size="40" fill="#2d2d2d" stroke="#2d2d2d" stroke-width="2.6" textLength="18.15" lengthAdjust="spacingAndGlyphs">S</text></svg>
<svg style="position:absolute;left:1421px;top:579px;" width="98" height="48" viewBox="0 0 98 48"><rect x="15" y="0" width="15.2" height="15.2" fill="#2d2d2d"/><rect x="0" y="15" width="15.2" height="15.2" fill="#2d2d2d"/><text x="32.52" y="45.4" font-family="Liberation Sans, sans-serif" font-weight="bold" font-size="40" fill="#2d2d2d" stroke="#2d2d2d" stroke-width="2.6" textLength="9.45" lengthAdjust="spacingAndGlyphs">I</text><text x="45.13" y="45.4" font-family="Liberation Sans, sans-serif" font-weight="bold" font-size="40" fill="#2d2d2d" stroke="#2d2d2d" stroke-width="2.6" textLength="18.02" lengthAdjust="spacingAndGlyphs">D</text><text x="66.23" y="45.4" font-family="Liberation Sans, sans-serif" font-weight="bold" font-size="40" fill="#2d2d2d" stroke="#2d2d2d" stroke-width="2.6" textLength="9.84" lengthAdjust="spacingAndGlyphs">I</text><text x="79.02" y="45.4" font-family="Liberation Sans, sans-serif" font-weight="bold" font-size="40" fill="#2d2d2d" stroke="#2d2d2d" stroke-width="2.6" textLength="18.15" lengthAdjust="spacingAndGlyphs">S</text></svg>
<svg style="position:absolute;left:99px;top:727px;" width="98" height="48" viewBox="0 0 98 48"><rect x="15" y="0" width="15.2" height="15.2" fill="#2d2d2d"/><rect x="0" y="15" width="15.2" height="15.2" fill="#2d2d2d"/><text x="32.52" y="45.4" font-family="Liberation Sans, sans-serif" font-weight="bold" font-size="40" fill="#2d2d2d" stroke="#2d2d2d" stroke-width="2.6" textLength="9.45" lengthAdjust="spacingAndGlyphs">I</text><text x="45.13" y="45.4" font-family="Liberation Sans, sans-serif" font-weight="bold" font-size="40" fill="#2d2d2d" stroke="#2d2d2d" stroke-width="2.6" textLength="18.02" lengthAdjust="spacingAndGlyphs">D</text><text x="66.23" y="45.4" font-family="Liberation Sans, sans-serif" font-weight="bold" font-size="40" fill="#2d2d2d" stroke="#2d2d2d" stroke-width="2.6" textLength="9.84" lengthAdjust="spacingAndGlyphs">I</text><text x="79.02" y="45.4" font-family="Liberation Sans, sans-serif" font-weight="bold" font-size="40" fill="#2d2d2d" stroke="#2d2d2d" stroke-width="2.6" textLength="18.15" lengthAdjust="spacingAndGlyphs">S</text></svg>
<svg style="position:absolute;left:363px;top:727px;" width="98" height="48" viewBox="0 0 98 48"><rect x="15" y="0" width="15.2" height="15.2" fill="#2d2d2d"/><rect x="0" y="15" width="15.2" height="15.2" fill="#2d2d2d"/><text x="32.52" y="45.4" font-family="Liberation Sans, sans-serif" font-weight="bold" font-size="40" fill="#2d2d2d" stroke="#2d2d2d" stroke-width="2.6" textLength="9.45" lengthAdjust="spacingAndGlyphs">I</text><text x="45.13" y="45.4" font-family="Liberation Sans, sans-serif" font-weight="bold" font-size="40" fill="#2d2d2d" stroke="#2d2d2d" stroke-width="2.6" textLength="18.02" lengthAdjust="spacingAndGlyphs">D</text><text x="66.23" y="45.4" font-family="Liberation Sans, sans-serif" font-weight="bold" font-size="40" fill="#2d2d2d" stroke="#2d2d2d" stroke-width="2.6" textLength="9.84" lengthAdjust="spacingAndGlyphs">I</text><text x="79.02" y="45.4" font-family="Liberation Sans, sans-serif" font-weight="bold" font-size="40" fill="#2d2d2d" stroke="#2d2d2d" stroke-width="2.6" textLength="18.15" lengthAdjust="spacingAndGlyphs">S</text></svg>
<svg style="position:absolute;left:628px;top:727px;" width="98" height="48" viewBox="0 0 98 48"><rect x="15" y="0" width="15.2" height="15.2" fill="#2d2d2d"/><rect x="0" y="15" width="15.2" height="15.2" fill="#2d2d2d"/><text x="32.52" y="45.4" font-family="Liberation Sans, sans-serif" font-weight="bold" font-size="40" fill="#2d2d2d" stroke="#2d2d2d" stroke-width="2.6" textLength="9.45" lengthAdjust="spacingAndGlyphs">I</text><text x="45.13" y="45.4" font-family="Liberation Sans, sans-serif" font-weight="bold" font-size="40" fill="#2d2d2d" stroke="#2d2d2d" stroke-width="2.6" textLength="18.02" lengthAdjust="spacingAndGlyphs">D</text><text x="66.23" y="45.4" font-family="Liberation Sans, sans-serif" font-weight="bold" font-size="40" fill="#2d2d2d" stroke="#2d2d2d" stroke-width="2.6" textLength="9.84" lengthAdjust="spacingAndGlyphs">I</text><text x="79.02" y="45.4" font-family="Liberation Sans, sans-serif" font-weight="bold" font-size="40" fill="#2d2d2d" stroke="#2d2d2d" stroke-width="2.6" textLength="18.15" lengthAdjust="spacingAndGlyphs">S</text></svg>
<svg style="position:absolute;left:892px;top:727px;" width="98" height="48" viewBox="0 0 98 48"><rect x="15" y="0" width="15.2" height="15.2" fill="#2d2d2d"/><rect x="0" y="15" width="15.2" height="15.2" fill="#2d2d2d"/><text x="32.52" y="45.4" font-family="Liberation Sans, sans-serif" font-weight="bold" font-size="40" fill="#2d2d2d" stroke="#2d2d2d" stroke-width="2.6" textLength="9.45" lengthAdjust="spacingAndGlyphs">I</text><text x="45.13" y="45.4" font-family="Liberation Sans, sans-serif" font-weight="bold" font-size="40" fill="#2d2d2d" stroke="#2d2d2d" stroke-width="2.6" textLength="18.02" lengthAdjust="spacingAndGlyphs">D</text><text x="66.23" y="45.4" font-family="Liberation Sans, sans-serif" font-weight="bold" font-size="40" fill="#2d2d2d" stroke="#2d2d2d" stroke-width="2.6" textLength="9.84" lengthAdjust="spacingAndGlyphs">I</text><text x="79.02" y="45.4" font-family="Liberation Sans, sans-serif" font-weight="bold" font-size="40" fill="#2d2d2d" stroke="#2d2d2d" stroke-width="2.6" textLength="18.15" lengthAdjust="spacingAndGlyphs">S</text></svg>
<svg style="position:absolute;left:99px;top:875px;" width="98" height="48" viewBox="0 0 98 48"><rect x="15" y="0" width="15.2" height="15.2" fill="#2d2d2d"/><rect x="0" y="15" width="15.2" height="15.2" fill="#2d2d2d"/><text x="32.52" y="45.4" font-family="Liberation Sans, sans-serif" font-weight="bold" font-size="40" fill="#2d2d2d" stroke="#2d2d2d" stroke-width="2.6" textLength="9.45" lengthAdjust="spacingAndGlyphs">I</text><text x="45.13" y="45.4" font-family="Liberation Sans, sans-serif" font-weight="bold" font-size="40" fill="#2d2d2d" stroke="#2d2d2d" stroke-width="2.6" textLength="18.02" lengthAdjust="spacingAndGlyphs">D</text><text x="66.23" y="45.4" font-family="Liberation Sans, sans-serif" font-weight="bold" font-size="40" fill="#2d2d2d" stroke="#2d2d2d" stroke-width="2.6" textLength="9.84" lengthAdjust="spacingAndGlyphs">I</text><text x="79.02" y="45.4" font-family="Liberation Sans, sans-serif" font-weight="bold" font-size="40" fill="#2d2d2d" stroke="#2d2d2d" stroke-width="2.6" textLength="18.15" lengthAdjust="spacingAndGlyphs">S</text></svg>
<svg style="position:absolute;left:363px;top:875px;" width="98" height="48" viewBox="0 0 98 48"><rect x="15" y="0" width="15.2" height="15.2" fill="#2d2d2d"/><rect x="0" y="15" width="15.2" height="15.2" fill="#2d2d2d"/><text x="32.52" y="45.4" font-family="Liberation Sans, sans-serif" font-weight="bold" font-size="40" fill="#2d2d2d" stroke="#2d2d2d" stroke-width="2.6" textLength="9.45" lengthAdjust="spacingAndGlyphs">I</text><text x="45.13" y="45.4" font-family="Liberation Sans, sans-serif" font-weight="bold" font-size="40" fill="#2d2d2d" stroke="#2d2d2d" stroke-width="2.6" textLength="18.02" lengthAdjust="spacingAndGlyphs">D</text><text x="66.23" y="45.4" font-family="Liberation Sans, sans-serif" font-weight="bold" font-size="40" fill="#2d2d2d" stroke="#2d2d2d" stroke-width="2.6" textLength="9.84" lengthAdjust="spacingAndGlyphs">I</text><text x="79.02" y="45.4" font-family="Liberation Sans, sans-serif" font-weight="bold" font-size="40" fill="#2d2d2d" stroke="#2d2d2d" stroke-width="2.6" textLength="18.15" lengthAdjust="spacingAndGlyphs">S</text></svg>
<svg style="position:absolute;left:628px;top:875px;" width="98" height="48" viewBox="0 0 98 48"><rect x="15" y="0" width="15.2" height="15.2" fill="#2d2d2d"/><rect x="0" y="15" width="15.2" height="15.2" fill="#2d2d2d"/><text x="32.52" y="45.4" font-family="Liberation Sans, sans-serif" font-weight="bold" font-size="40" fill="#2d2d2d" stroke="#2d2d2d" stroke-width="2.6" textLength="9.45" lengthAdjust="spacingAndGlyphs">I</text><text x="45.13" y="45.4" font-family="Liberation Sans, sans-serif" font-weight="bold" font-size="40" fill="#2d2d2d" stroke="#2d2d2d" stroke-width="2.6" textLength="18.02" lengthAdjust="spacingAndGlyphs">D</text><text x="66.23" y="45.4" font-family="Liberation Sans, sans-serif" font-weight="bold" font-size="40" fill="#2d2d2d" stroke="#2d2d2d" stroke-width="2.6" textLength="9.84" lengthAdjust="spacingAndGlyphs">I</text><text x="79.02" y="45.4" font-family="Liberation Sans, sans-serif" font-weight="bold" font-size="40" fill="#2d2d2d" stroke="#2d2d2d" stroke-width="2.6" textLength="18.15" lengthAdjust="spacingAndGlyphs">S</text></svg>
<svg style="position:absolute;left:892px;top:875px;" width="98" height="48" viewBox="0 0 98 48"><rect x="15" y="0" width="15.2" height="15.2" fill="#2d2d2d"/><rect x="0" y="15" width="15.2" height="15.2" fill="#2d2d2d"/><text x="32.52" y="45.4" font-family="Liberation Sans, sans-serif" font-weight="bold" font-size="40" fill="#2d2d2d" stroke="#2d2d2d" stroke-width="2.6" textLength="9.45" lengthAdjust="spacingAndGlyphs">I</text><text x="45.13" y="45.4" font-family="Liberation Sans, sans-serif" font-weight="bold" font-size="40" fill="#2d2d2d" stroke="#2d2d2d" stroke-width="2.6" textLength="18.02" lengthAdjust="spacingAndGlyphs">D</text><text x="66.23" y="45.4" font-family="Liberation Sans, sans-serif" font-weight="bold" font-size="40" fill="#2d2d2d" stroke="#2d2d2d" stroke-width="2.6" textLength="9.84" lengthAdjust="spacingAndGlyphs">I</text><text x="79.02" y="45.4" font-family="Liberation Sans, sans-serif" font-weight="bold" font-size="40" fill="#2d2d2d" stroke="#2d2d2d" stroke-width="2.6" textLength="18.15" lengthAdjust="spacingAndGlyphs">S</text></svg>
<svg style="position:absolute;left:1254px;top:778px;" width="169" height="83" viewBox="0 0 98 48"><rect x="15" y="0" width="15.2" height="15.2" fill="#2d2d2d"/><rect x="0" y="15" width="15.2" height="15.2" fill="#2d2d2d"/><text x="32.52" y="45.4" font-family="Liberation Sans, sans-serif" font-weight="bold" font-size="40" fill="#2d2d2d" stroke="#2d2d2d" stroke-width="2.6" textLength="9.45" lengthAdjust="spacingAndGlyphs">I</text><text x="45.13" y="45.4" font-family="Liberation Sans, sans-serif" font-weight="bold" font-size="40" fill="#2d2d2d" stroke="#2d2d2d" stroke-width="2.6" textLength="18.02" lengthAdjust="spacingAndGlyphs">D</text><text x="66.23" y="45.4" font-family="Liberation Sans, sans-serif" font-weight="bold" font-size="40" fill="#2d2d2d" stroke="#2d2d2d" stroke-width="2.6" textLength="9.84" lengthAdjust="spacingAndGlyphs">I</text><text x="79.02" y="45.4" font-family="Liberation Sans, sans-serif" font-weight="bold" font-size="40" fill="#2d2d2d" stroke="#2d2d2d" stroke-width="2.6" textLength="18.15" lengthAdjust="spacingAndGlyphs">S</text></svg>
<div style="position:absolute;left:282px;top:95px;width:1px;height:146px;background:#1e1e1e"></div>
<div style="position:absolute;left:18px;top:94px;width:264px;height:147px;border:2px solid #00a6b8"></div>
<div class="t" style="left:22.6px;top:97.4px;font-size:13.5px;color:#e2e2e2;text-shadow:0 0 1.5px #000,0 0 1.5px #000">1</div>
<div style="position:absolute;left:45px;top:108.5px;width:982.5px;height:662.5px;background:#333333"></div>
<div style="position:absolute;left:45px;top:108.5px;width:982.5px;height:27.5px;background:linear-gradient(#4d4d4d 0%,#444 15%,#363636 40%,#313131 60%,#303030)"></div>
<div style="position:absolute;left:49px;top:136px;width:975px;height:630px;background:#5b5b5b"></div>
<svg style="position:absolute;left:53px;top:117px;" width="13" height="13" viewBox="0 0 13 13"><defs><radialGradient id="gGlb" cx="0.4" cy="0.3" r="0.75"><stop offset="0" stop-color="#5b6c80"/><stop offset="0.45" stop-color="#1c222b"/><stop offset="1" stop-color="#050505"/></radialGradient></defs><circle cx="6.5" cy="6.5" r="6.3" fill="url(#gGlb)"/><path d="M3.2 3.6 C4.6 2.2 6.6 2.6 6 4.4 C5.6 5.8 4.2 5.6 4 7.4 C3.9 8.6 5 9.4 5.8 9 M7.6 6.4 L9 8.6" stroke="#93a6bb" stroke-width="1.1" fill="none" opacity="0.85"/><circle cx="9.6" cy="7.4" r="0.7" fill="#f0f4f8"/></svg>
<div class="t" style="left:71.08px;top:115.5px;font-size:12px;color:#bcbcbc;letter-spacing:-0.038px;">Настройка IDIS Center</div>
<svg style="position:absolute;left:1008px;top:119px;" width="9" height="8" viewBox="0 0 9 8"><path d="M1 0.6 L8 7.4 M8 0.6 L1 7.4" stroke="#828282" stroke-width="2"/></svg>
<div style="position:absolute;left:57px;top:168px;width:190px;height:99px;background:#3f3f3f;border-radius:7px"></div>
<div style="position:absolute;left:57px;top:276px;width:190px;height:351px;background:#3f3f3f;border-radius:7px"></div>
<div style="position:absolute;left:64px;top:175px;width:180px;height:28px;background:#7b7b7b"></div>
<div class="t" style="left:73.36px;top:181px;font-size:11px;color:#f4f4f4;letter-spacing:0.164px;">Устройство</div>
<div class="t" style="left:73.36px;top:209px;font-size:11px;color:#f4f4f4;letter-spacing:0.167px;">пользователь</div>
<div class="t" style="left:73.36px;top:237px;font-size:11px;color:#f4f4f4;letter-spacing:0.046px;">Запись по тревоге</div>
<div class="t" style="left:73.36px;top:289px;font-size:11px;color:#f4f4f4;letter-spacing:-0.063px;">Системные настройки</div>
<div class="t" style="left:73.36px;top:317px;font-size:11px;color:#f4f4f4;letter-spacing:-0.060px;">Формат экрана</div>
<div class="t" style="left:73.36px;top:345px;font-size:11px;color:#f4f4f4;letter-spacing:0.010px;">Отображение экрана</div>
<div class="t" style="left:73.36px;top:373px;font-size:11px;color:#f4f4f4;letter-spacing:0.001px;">Улучшение видеоизображения</div>
<div class="t" style="left:73.36px;top:401px;font-size:11px;color:#f4f4f4;letter-spacing:0.351px;">Отчет</div>
<div class="t" style="left:73.36px;top:429px;font-size:11px;color:#f4f4f4;letter-spacing:-0.052px;">Мгновенное событие</div>
<div class="t" style="left:73.36px;top:457px;font-size:11px;color:#f4f4f4;letter-spacing:-0.171px;">Параметры</div>
<div class="t" style="left:73.36px;top:485px;font-size:11px;color:#f4f4f4;letter-spacing:-0.200px;">Сайт</div>
<div class="t" style="left:73.36px;top:513px;font-size:11px;color:#f4f4f4;letter-spacing:0.406px;">Карта.</div>
<div class="t" style="left:73.36px;top:541px;font-size:11px;color:#f4f4f4;letter-spacing:-0.078px;">Браузер</div>
<div class="t" style="left:73.36px;top:569px;font-size:11px;color:#f4f4f4;letter-spacing:0.095px;">Действие</div>
<div class="t" style="left:73.36px;top:597px;font-size:11px;color:#f4f4f4;letter-spacing:0.045px;">Сохранить</div>
<div style="position:absolute;left:62px;top:742.5px;width:12px;height:12px;background:linear-gradient(135deg,#e4e4e4,#fff 60%);border:1px solid #4e4e4e;border-radius:1px"></div>
<svg style="position:absolute;left:62px;top:742.5px;" width="12" height="12" viewBox="0 0 12 12"><path d="M2.4 5.6 L5 8.8 L9.8 2.8" stroke="#179a17" stroke-width="2.2" fill="none"/></svg>
<div class="t" style="left:77.11px;top:740px;font-size:11px;color:#e6e6e6;letter-spacing:0.426px;">Поверх других окон</div>
<div style="position:absolute;left:238px;top:144px;width:780px;height:616px;background:#787878;border-radius:7px"></div>
<svg style="position:absolute;left:251px;top:155px;" width="18" height="19" viewBox="0 0 18 19"><polygon points="9,0 15.4,6.2 12,6.2 12,11.4 6,11.4 6,6.2 2.6,6.2" fill="url(#gWh)"/><rect x="0.6" y="12.2" width="16.8" height="6.2" rx="0.8" fill="url(#gWh)"/><rect x="2.4" y="13.8" width="5.6" height="1.1" fill="#a9a3ad"/></svg>
<svg style="position:absolute;left:281px;top:154px;" width="20" height="20" viewBox="0 0 20 20"><path d="M1 6.4 A11.8 11.8 0 0 1 19 6.4" fill="none" stroke="#f7f7f7" stroke-width="2.3"/><path d="M4.6 9 A7.2 7.2 0 0 1 15.4 9" fill="none" stroke="#f2f2f2" stroke-width="2"/><circle cx="10" cy="13.8" r="3" fill="none" stroke="#ebe7ee" stroke-width="2.4"/><circle cx="10" cy="13.8" r="4.7" fill="none" stroke="#ebe7ee" stroke-width="1.5" stroke-dasharray="1.35 1.11"/></svg>
<svg style="position:absolute;left:311px;top:154px;" width="22" height="20" viewBox="0 0 22 20"><path d="M5 7.5 C5 2 10 5.5 15.4 1.2" fill="none" stroke="#f4f4f4" stroke-width="1.4"/><rect x="0.8" y="7" width="20" height="11.6" rx="1" fill="url(#gWh)"/><rect x="3.4" y="8.6" width="14.8" height="1.1" fill="#8f8a93"/></svg>
<div style="position:absolute;left:838px;top:153px;width:173px;height:21px;background:linear-gradient(#cfcfcf 0,#f0f0f0 2px,#f0f0f0 19px,#fdfdfd 100%);border-radius:11px"></div>
<svg style="position:absolute;left:848px;top:156px;" width="18" height="16" viewBox="0 0 18 16"><circle cx="7.7" cy="5.5" r="4.6" fill="none" stroke="#565656" stroke-width="1.7"/><path d="M4.6 9.2 L1 13.2" stroke="#565656" stroke-width="2.3"/><polygon points="11.4,12.3 17.2,12.3 14.3,15.6" fill="#565656"/></svg>
<div style="position:absolute;left:247px;top:181px;width:190px;height:22px;background:#666666"></div>
<div class="t" style="left:327.83px;top:183.5px;font-size:12px;color:#efefef;letter-spacing:-0.362px;">Сайт</div>
<div style="position:absolute;left:247px;top:203px;width:190px;height:521px;background:#404040"></div>
<svg style="position:absolute;left:265px;top:206.5px;" width="16" height="14" viewBox="0 0 16 14"><polygon points="0.5,5.2 9.5,0.8 15.5,4 15.5,8.6 6.5,13.4 0.5,10" fill="#8d8d8d"/><polygon points="0.5,5.2 9.5,0.8 15.5,4 6.5,8.4" fill="#c9c9c9"/><polygon points="0.5,5.2 6.5,8.4 6.5,13.4 0.5,10" fill="#6f6f6f"/><polygon points="6.5,8.4 15.5,4 15.5,8.6 6.5,13.4" fill="#a3a3a3"/><polygon points="2,7.2 5.2,8.9 5.2,11.6 2,9.8" fill="#4c8a1e"/><polygon points="3,8.3 4.6,9.2 4.6,10.5 3,9.6" fill="#b9e83a"/></svg>
<div class="t" style="left:284.62px;top:205px;font-size:11px;color:#d2d2d2;letter-spacing:0.064px;">Все устройства</div>
<svg style="position:absolute;left:251.5px;top:232.5px;" width="10" height="6" viewBox="0 0 10 6"><polygon points="0,0 9.4,0 4.7,5.6" fill="#7a7a7a"/></svg>
<svg style="position:absolute;left:265px;top:228px;" width="16" height="16" viewBox="0 0 16 16"><polygon points="0.5,3.2 8,0.4 15.5,3.2 15.5,12 8,15.6 0.5,12" fill="#4fd25a"/><polygon points="0.5,3.2 8,0.4 15.5,3.2 8,5.8" fill="#9af09c"/><polygon points="0.5,3.2 8,5.8 8,15.6 0.5,12" fill="#58d862"/><polygon points="8,5.8 15.5,3.2 15.5,12 8,15.6" fill="#3cbf49"/><polygon points="2,5.4 6.8,7 6.8,12.6 2,10.6" fill="#7de884" opacity="0.55"/></svg>
<div class="t" style="left:284.62px;top:227px;font-size:11px;color:#d2d2d2;letter-spacing:0.195px;">Группа устройств</div>
<svg style="position:absolute;left:281px;top:250px;" width="16" height="16" viewBox="0 0 16 16"><polygon points="0.5,3.2 8,0.4 15.5,3.2 15.5,12 8,15.6 0.5,12" fill="#4fd25a"/><polygon points="0.5,3.2 8,0.4 15.5,3.2 8,5.8" fill="#9af09c"/><polygon points="0.5,3.2 8,5.8 8,15.6 0.5,12" fill="#58d862"/><polygon points="8,5.8 15.5,3.2 15.5,12 8,15.6" fill="#3cbf49"/><polygon points="2,5.4 6.8,7 6.8,12.6 2,10.6" fill="#7de884" opacity="0.55"/></svg>
<div class="t" style="left:300.87px;top:249px;font-size:11px;color:#d2d2d2;letter-spacing:0.166px;">Group1</div>
<svg style="position:absolute;left:267.5px;top:274.5px;" width="12" height="12" viewBox="0 0 12 12"><rect x="0" y="0" width="12" height="12" fill="#1a5e8c"/><rect x="0.8" y="0.8" width="4.8" height="4.8" fill="url(#gBlu)"/><rect x="6.4" y="0.8" width="4.8" height="4.8" fill="url(#gBlu)"/><rect x="0.8" y="6.4" width="4.8" height="4.8" fill="url(#gBlu)"/><rect x="6.4" y="6.4" width="4.8" height="4.8" fill="url(#gBlu)"/></svg>
<div class="t" style="left:284.62px;top:271px;font-size:11px;color:#d2d2d2;letter-spacing:0.534px;">Макет</div>
<svg style="position:absolute;left:265px;top:295px;" width="16" height="14" viewBox="0 0 16 14"><polygon points="4,0.5 15,0.5 15,9.5 11,13.5 0.5,13.5 0.5,4" fill="#2a6d99"/><polygon points="4.6,1.2 14.3,1.2 14.3,9 12.5,10.5 12.5,3 3,3" fill="#cfe9f5"/><rect x="0.5" y="4" width="10.5" height="9.5" fill="#1a5e8c"/><rect x="1.2" y="4.7" width="4.2" height="3.8" fill="url(#gBlu)"/><rect x="6.1" y="4.7" width="4.2" height="3.8" fill="url(#gBlu)"/><rect x="1.2" y="9.1" width="4.2" height="3.8" fill="url(#gBlu)"/><rect x="6.1" y="9.1" width="4.2" height="3.8" fill="url(#gBlu)"/></svg>
<div class="t" style="left:284.62px;top:293px;font-size:11px;color:#d2d2d2;letter-spacing:0.083px;">Последовательность маке...</div>
<svg style="position:absolute;left:265px;top:317px;" width="16" height="14" viewBox="0 0 16 14"><polygon points="4,0.5 15,0.5 15,9.5 11,13.5 0.5,13.5 0.5,4" fill="#2a6d99"/><polygon points="4.6,1.2 14.3,1.2 14.3,9 12.5,10.5 12.5,3 3,3" fill="#cfe9f5"/><rect x="0.5" y="4" width="10.5" height="9.5" fill="#2a6d99"/><rect x="1.1" y="4.6" width="9.3" height="8.3" fill="url(#gBlu)"/></svg>
<div class="t" style="left:284.62px;top:315px;font-size:11px;color:#d2d2d2;letter-spacing:0.218px;">Последовательность камер</div>
<svg style="position:absolute;left:266px;top:339px;" width="15" height="15" viewBox="0 0 15 15"><rect x="0" y="0" width="15" height="15" fill="#9a9a9a"/><rect x="0.9" y="0.9" width="13.2" height="13.2" fill="#f3ecd6"/><rect x="0.9" y="8" width="13.2" height="3" fill="#f6b21c"/><rect x="4.4" y="0.9" width="2.8" height="13.2" fill="#f8e050"/><rect x="10.6" y="4.6" width="3.5" height="1.8" fill="#f8e050"/><path d="M4 7 L6.1 11.6 L8.2 7 Z" fill="#d8242c"/><circle cx="6.1" cy="6.2" r="2.3" fill="#e22a32"/><circle cx="5.5" cy="5.5" r="0.7" fill="#f58a8e"/></svg>
<div class="t" style="left:284.62px;top:337px;font-size:11px;color:#d2d2d2;letter-spacing:0.056px;">Карта.</div>
<svg style="position:absolute;left:265px;top:360px;" width="15" height="15" viewBox="0 0 15 15"><path d="M13.6 8.6 H4.6 a3.4 3.4 0 0 0 6.3 1.4 h2.4 a5.8 5.8 0 1 1 0.3 -1.4 Z M4.7 6.6 h6.3 a3.2 3.2 0 0 0 -6.3 0 Z" fill="#3aa0e0" fill-rule="evenodd" transform="translate(-0.6,-0.8) scale(1.12)"/></svg>
<div class="t" style="left:284.62px;top:359px;font-size:11px;color:#d2d2d2;letter-spacing:0.047px;">Браузер</div>
<div style="position:absolute;left:247px;top:724px;width:126px;height:27px;background:linear-gradient(#707070 0%,#565656 12%,#2c2c2c 30%,#0a0a0a 44%,#000 50%);border-radius:0 0 8px 8px"></div>
<svg style="position:absolute;left:262.5px;top:731.5px;" width="12" height="12" viewBox="0 0 12 12"><path d="M6 0.5 V11.5 M0.5 6 H11.5" stroke="#9c9c9c" stroke-width="3.1"/></svg>
<svg style="position:absolute;left:304px;top:731.5px;" width="12" height="12" viewBox="0 0 12 12"><path d="M0 6 H11" stroke="#8c8c8c" stroke-width="3.1"/></svg>
<svg style="position:absolute;left:343px;top:730px;" width="17" height="16" viewBox="0 0 17 16"><rect x="0.8" y="2.3" width="11.4" height="11" fill="none" stroke="#9c9c9c" stroke-width="1.9"/><path d="M6.6 9.6 L15 0.8" stroke="#9c9c9c" stroke-width="2.2"/></svg>
<div style="position:absolute;left:441px;top:181px;width:556px;height:22px;background:#666666"></div>
<div class="t" style="left:506.58px;top:183.5px;font-size:12px;color:#efefef;letter-spacing:0.484px;">Имя</div>
<div class="t" style="left:627.58px;top:183.5px;font-size:12px;color:#efefef;letter-spacing:0.401px;">группа</div>
<div class="t" style="left:719.58px;top:183.5px;font-size:12px;color:#efefef;letter-spacing:0.059px;">Адрес</div>
<div class="t" style="left:825.83px;top:183.5px;font-size:12px;color:#efefef;letter-spacing:0.043px;">Тип</div>
<div class="t" style="left:913.83px;top:183.5px;font-size:12px;color:#efefef;letter-spacing:0.090px;">Описание</div>
<div style="position:absolute;left:606px;top:183px;width:1px;height:18px;background:#7a7a7a"></div>
<div style="position:absolute;left:696px;top:183px;width:1px;height:18px;background:#7a7a7a"></div>
<div style="position:absolute;left:786px;top:183px;width:1px;height:18px;background:#7a7a7a"></div>
<div style="position:absolute;left:894px;top:183px;width:1px;height:18px;background:#7a7a7a"></div>
<svg style="position:absolute;left:592px;top:188px;" width="11" height="6" viewBox="0 0 11 6"><polygon points="5.5,0 10.6,5.4 0.4,5.4" fill="#e0e0e0"/></svg>
<div style="position:absolute;left:441px;top:203px;width:556px;height:22px;background:#454545"></div>
<div style="position:absolute;left:441px;top:225px;width:556px;height:22px;background:#555555"></div>
<div style="position:absolute;left:441px;top:247px;width:556px;height:22px;background:#454545"></div>
<div style="position:absolute;left:441px;top:269px;width:556px;height:22px;background:#555555"></div>
<div style="position:absolute;left:441px;top:291px;width:556px;height:22px;background:#454545"></div>
<div style="position:absolute;left:441px;top:313px;width:556px;height:22px;background:#555555"></div>
<div style="position:absolute;left:441px;top:335px;width:556px;height:22px;background:#454545"></div>
<div style="position:absolute;left:441px;top:357px;width:556px;height:22px;background:#555555"></div>
<div style="position:absolute;left:441px;top:379px;width:556px;height:22px;background:#454545"></div>
<div style="position:absolute;left:441px;top:401px;width:556px;height:22px;background:#555555"></div>
<div style="position:absolute;left:441px;top:423px;width:556px;height:22px;background:#454545"></div>
<div style="position:absolute;left:441px;top:445px;width:556px;height:22px;background:#555555"></div>
<div style="position:absolute;left:441px;top:467px;width:556px;height:22px;background:#454545"></div>
<div style="position:absolute;left:441px;top:489px;width:556px;height:22px;background:#555555"></div>
<div style="position:absolute;left:441px;top:511px;width:556px;height:22px;background:#454545"></div>
<div style="position:absolute;left:441px;top:533px;width:556px;height:22px;background:#555555"></div>
<div style="position:absolute;left:441px;top:555px;width:556px;height:22px;background:#454545"></div>
<div style="position:absolute;left:441px;top:577px;width:556px;height:22px;background:#555555"></div>
<div style="position:absolute;left:441px;top:599px;width:556px;height:22px;background:#454545"></div>
<div style="position:absolute;left:441px;top:621px;width:556px;height:22px;background:#555555"></div>
<div style="position:absolute;left:441px;top:643px;width:556px;height:22px;background:#454545"></div>
<div style="position:absolute;left:441px;top:665px;width:556px;height:22px;background:#555555"></div>
<div style="position:absolute;left:441px;top:687px;width:556px;height:22px;background:#454545"></div>
<div style="position:absolute;left:441px;top:709px;width:556px;height:15px;background:#555555"></div>
<svg style="position:absolute;left:445.5px;top:211px;" width="10" height="6" viewBox="0 0 10 6"><polygon points="0,0 9.4,0 4.7,5.4" fill="#8c8c8c"/></svg>
<div style="position:absolute;left:441px;top:724px;width:200px;height:27px;background:linear-gradient(#707070 0%,#565656 12%,#2c2c2c 30%,#0a0a0a 44%,#000 50%);border-radius:0 0 0 8px"></div>
<div style="position:absolute;left:998px;top:181px;width:17px;height:560px;background:linear-gradient(90deg,#5a5a5a,#6a6a6a 50%,#707070)"></div>
<div style="position:absolute;left:998px;top:181px;width:17px;height:17px;background:linear-gradient(#8a8a8a,#6c6c6c);border:1px solid #5a5a5a"></div>
<svg style="position:absolute;left:1002px;top:187px;" width="9" height="6" viewBox="0 0 9 6"><polygon points="4.5,0 9,5 0,5" fill="#0a0a0a"/></svg>
<div style="position:absolute;left:999.5px;top:198.5px;width:14px;height:60px;background:linear-gradient(90deg,#a0a0a0,#acacac 45%,#9a9a9a);border:1px solid #b2b2b2;border-radius:3px"></div>
<div style="position:absolute;left:453px;top:203px;width:815px;height:630px;background:#1a1a1a;border:1px solid #000"></div>
<div style="position:absolute;left:454px;top:204px;width:813px;height:22px;background:linear-gradient(#383838,#2a2a2a 12%,#202020 28%,#1a1a1a 50%)"></div>
<div style="position:absolute;left:457px;top:226px;width:807px;height:603px;background:#5b5b5b"></div>
<div class="t" style="left:458.62px;top:208px;font-size:11px;color:#f2f2f2;letter-spacing:0.288px;">Сканирование устройств</div>
<svg style="position:absolute;left:1250px;top:211px;" width="8" height="8" viewBox="0 0 8 8"><path d="M1 1 L7 7 M7 1 L1 7" stroke="#fff" stroke-width="2"/></svg>
<div style="position:absolute;left:475px;top:242px;width:598px;height:72px;border:1px solid #747474"></div>
<div class="t" style="left:493.87px;top:254px;font-size:11px;color:#f4f4f4;letter-spacing:-0.037px;">Режим сканирования :</div>
<div style="position:absolute;left:616px;top:252px;width:279px;height:21px;background:#5e5e5e;border:1px solid #454545"></div>
<div class="t" style="left:619.12px;top:255px;font-size:11px;color:#8c8c8c;letter-spacing:-0.039px;">Автоматический режим сканирования (ЛВС)</div>
<div style="position:absolute;left:877px;top:254px;width:17px;height:17px;background:linear-gradient(#929292,#808080);border:1px solid #6c6c6c"></div>
<svg style="position:absolute;left:881px;top:260px;" width="9" height="6" viewBox="0 0 9 6"><path d="M1 1 L4.5 4.6 L8 1" stroke="#7a7a7a" stroke-width="1.4" fill="none"/></svg>
<div style="position:absolute;left:1087px;top:291px;width:161px;height:23px;background:linear-gradient(#404040,#383838);border:1px solid #a4a4a4;border-radius:4px"></div>
<div class="t" style="left:1099.12px;top:295px;font-size:11px;color:#ffffff;letter-spacing:0.051px;">Остановить сканирование</div>
<div style="position:absolute;left:1036px;top:325px;width:211px;height:22px;background:linear-gradient(#cfcfcf 0,#f0f0f0 2px,#f0f0f0 19px,#fdfdfd 100%);border-radius:11px"></div>
<svg style="position:absolute;left:1046px;top:328px;" width="18" height="16" viewBox="0 0 18 16"><circle cx="7.7" cy="5.5" r="4.6" fill="none" stroke="#565656" stroke-width="1.7"/><path d="M4.6 9.2 L1 13.2" stroke="#565656" stroke-width="2.3"/><polygon points="11.4,12.3 17.2,12.3 14.3,15.6" fill="#565656"/></svg>
<div style="position:absolute;left:483px;top:336px;width:13px;height:13px;border:1px solid #cfcfcf;background:#595959"></div>
<div class="t" style="left:497.87px;top:335px;font-size:11px;color:#8c8c8c;letter-spacing:0.181px;">выбрать всё</div>
<div class="t" style="left:611.62px;top:335px;font-size:11px;color:#dcdcdc;letter-spacing:0.136px;">Устройства: 1 / Макс. 1024</div>
<div style="position:absolute;left:473px;top:353px;width:775px;height:431px;background:#787878;border-radius:6px"></div>
<div style="position:absolute;left:481px;top:362px;width:758px;height:22px;background:#666666"></div>
<div class="t" style="left:565.83px;top:364.5px;font-size:12px;color:#efefef;letter-spacing:0.359px;">Имя</div>
<div class="t" style="left:723.83px;top:364.5px;font-size:12px;color:#efefef;letter-spacing:0.059px;">Адрес</div>
<div class="t" style="left:845.83px;top:364.5px;font-size:12px;color:#efefef;letter-spacing:0.043px;">Тип</div>
<div class="t" style="left:950.83px;top:364.5px;font-size:12px;color:#efefef;letter-spacing:0.090px;">Описание</div>
<div class="t" style="left:1101.58px;top:364.5px;font-size:12px;color:#efefef;letter-spacing:0.026px;">Состояние</div>
<div style="position:absolute;left:684px;top:364px;width:1px;height:18px;background:#7a7a7a"></div>
<div style="position:absolute;left:806px;top:364px;width:1px;height:18px;background:#7a7a7a"></div>
<div style="position:absolute;left:915px;top:364px;width:1px;height:18px;background:#7a7a7a"></div>
<div style="position:absolute;left:1051px;top:364px;width:1px;height:18px;background:#7a7a7a"></div>
<div style="position:absolute;left:1220px;top:364px;width:1px;height:18px;background:#7a7a7a"></div>
<svg style="position:absolute;left:670px;top:369px;" width="11" height="6" viewBox="0 0 11 6"><polygon points="5.5,0 10.6,5.4 0.4,5.4" fill="#e0e0e0"/></svg>
<div style="position:absolute;left:481px;top:384px;width:758px;height:22px;background:#444444"></div>
<div style="position:absolute;left:481px;top:406px;width:758px;height:22px;background:#545454"></div>
<div style="position:absolute;left:481px;top:428px;width:758px;height:22px;background:#444444"></div>
<div style="position:absolute;left:481px;top:450px;width:758px;height:22px;background:#545454"></div>
<div style="position:absolute;left:481px;top:472px;width:758px;height:22px;background:#444444"></div>
<div style="position:absolute;left:481px;top:494px;width:758px;height:22px;background:#545454"></div>
<div style="position:absolute;left:481px;top:516px;width:758px;height:22px;background:#444444"></div>
<div style="position:absolute;left:481px;top:538px;width:758px;height:22px;background:#545454"></div>
<div style="position:absolute;left:481px;top:560px;width:758px;height:22px;background:#444444"></div>
<div style="position:absolute;left:481px;top:582px;width:758px;height:22px;background:#545454"></div>
<div style="position:absolute;left:481px;top:604px;width:758px;height:22px;background:#444444"></div>
<div style="position:absolute;left:481px;top:626px;width:758px;height:22px;background:#545454"></div>
<div style="position:absolute;left:481px;top:648px;width:758px;height:22px;background:#444444"></div>
<div style="position:absolute;left:481px;top:670px;width:758px;height:22px;background:#545454"></div>
<div style="position:absolute;left:481px;top:692px;width:758px;height:22px;background:#444444"></div>
<div style="position:absolute;left:481px;top:714px;width:758px;height:22px;background:#545454"></div>
<div style="position:absolute;left:481px;top:736px;width:758px;height:22px;background:#444444"></div>
<div style="position:absolute;left:481px;top:758px;width:758px;height:18px;background:#545454"></div>
<div style="position:absolute;left:501px;top:389px;width:12px;height:12px;border:1px solid #d0d0d0;background:#484848"></div>
<svg style="position:absolute;left:516px;top:390px;" width="15.5" height="10" viewBox="0 0 15.5 10"><rect x="0" y="1" width="15.5" height="8.6" rx="1.4" fill="url(#gGry)"/><rect x="1" y="0.2" width="13.5" height="1.6" rx="0.8" fill="#dcdcdc"/><rect x="1.6" y="3" width="1.4" height="1.3" fill="#333"/><rect x="3.8" y="3" width="1.4" height="1.3" fill="#333"/><rect x="6" y="3" width="1.4" height="1.3" fill="#333"/><rect x="1.6" y="6" width="6" height="1.1" fill="#555"/><circle cx="11.8" cy="5.5" r="2.3" fill="#777"/><circle cx="11.8" cy="5.5" r="1.4" fill="#e8e8e8"/></svg>
<div class="t" style="left:535.12px;top:386px;font-size:11px;color:#12c4c0;letter-spacing:0.634px;">ixbt</div>
<div class="t" style="left:687.12px;top:386px;font-size:11px;color:#6e6e6e;letter-spacing:-0.423px;">192.168.1.181</div>
<div class="t" style="left:808.87px;top:386px;font-size:11px;color:#6e6e6e;letter-spacing:-0.100px;">NVR (64 ch)</div>
<div class="t" style="left:1053.37px;top:386px;font-size:11px;color:#6e6e6e;letter-spacing:0.353px;">Зарегистрировано</div>
<div style="position:absolute;left:475px;top:790px;width:95px;height:24px;background:linear-gradient(#5a5a5a,#4f4f4f);border:1px solid #7c7c7c;border-radius:4px"></div>
<div class="t" style="left:478.37px;top:794px;font-size:11px;color:#8f8f8f;letter-spacing:0.084px;">Очистить список</div>
<div style="position:absolute;left:997px;top:790px;width:147px;height:24px;background:linear-gradient(#5a5a5a,#4f4f4f);border:1px solid #7c7c7c;border-radius:4px"></div>
<div class="t" style="left:1014.62px;top:794px;font-size:11px;color:#8f8f8f;letter-spacing:0.163px;">Добавить устройства</div>
<div style="position:absolute;left:1153px;top:790px;width:95px;height:24px;background:linear-gradient(#5a5a5a,#4f4f4f);border:1px solid #7c7c7c;border-radius:4px"></div>
<div class="t" style="left:1177.12px;top:794px;font-size:11px;color:#8f8f8f;letter-spacing:0.359px;">Закрыть</div>
<svg style="position:absolute;left:590px;top:791.5px;" width="22" height="22" viewBox="0 0 22 22"><circle cx="6.60" cy="18.62" r="2.6" fill="#e6e6ff"/><circle cx="11.00" cy="19.80" r="2.6" fill="#d4d4f4"/><circle cx="15.40" cy="18.62" r="2.6" fill="#c0c0e2"/><circle cx="18.62" cy="15.40" r="2.6" fill="#b0b0d2"/><circle cx="19.80" cy="11.00" r="2.6" fill="#a0a0bc"/><circle cx="18.62" cy="6.60" r="2.6" fill="#9292aa"/><circle cx="15.40" cy="3.38" r="2.6" fill="#88889c"/><circle cx="11.00" cy="2.20" r="2.6" fill="#7c7c8e"/><circle cx="6.60" cy="3.38" r="2.6" fill="#72727e"/><circle cx="3.38" cy="6.60" r="2.6" fill="#6a6a74"/><circle cx="2.20" cy="11.00" r="2.6" fill="#66666e"/><circle cx="3.38" cy="15.40" r="2.6" fill="#6c6c76"/></svg>
<div class="t" style="left:632.12px;top:794px;font-size:11px;color:#f0f0f0;letter-spacing:0.073px;">Выполняется сканирование устройств... Обнаружено 1 устройств</div>
<svg style="position:absolute;left:963px;top:537px;" width="13" height="20" viewBox="0 0 13 20"><path d="M0.6 0.8 V16.6 L4.3 13.1 L7 19 L9.7 17.8 L7 12 L11.9 12 Z" fill="#fff" stroke="#05051a" stroke-width="1.1" stroke-linejoin="round"/></svg>
<div class="t" style="left:1643.80px;top:69px;font-size:13px;color:#2ab8c8;letter-spacing:-0.440px;">Сайт</div>
<div style="position:absolute;left:1627px;top:94px;width:283px;height:1px;background:#3f3f3f"></div>
<div style="position:absolute;left:1629px;top:99px;width:279px;height:22px;background:linear-gradient(#cfcfcf 0,#f0f0f0 2px,#f0f0f0 19px,#fdfdfd 100%);border-radius:11px"></div>
<svg style="position:absolute;left:1640px;top:102px;" width="18" height="16" viewBox="0 0 18 16"><circle cx="7.7" cy="5.5" r="4.6" fill="none" stroke="#565656" stroke-width="1.7"/><path d="M4.6 9.2 L1 13.2" stroke="#565656" stroke-width="2.3"/><polygon points="11.4,12.3 17.2,12.3 14.3,15.6" fill="#565656"/></svg>
<div style="position:absolute;left:1627px;top:122px;width:283px;height:431px;overflow:hidden">
<div style="position:absolute;left:37px;top:1px;width:86px;height:21px;background:#8c8c8c"></div>
<svg style="position:absolute;left:6px;top:9px" width="10" height="6" viewBox="0 0 10 6"><polygon points="0,0 9.2,0 4.6,5.4" fill="#787878"/></svg>
<svg style="position:absolute;left:19px;top:5px" width="16" height="14" viewBox="0 0 16 14"><polygon points="0.5,5.2 9.5,0.8 15.5,4 15.5,8.6 6.5,13.4 0.5,10" fill="#8d8d8d"/><polygon points="0.5,5.2 9.5,0.8 15.5,4 6.5,8.4" fill="#c9c9c9"/><polygon points="0.5,5.2 6.5,8.4 6.5,13.4 0.5,10" fill="#6f6f6f"/><polygon points="6.5,8.4 15.5,4 15.5,8.6 6.5,13.4" fill="#a3a3a3"/><polygon points="2,7.2 5.2,8.9 5.2,11.6 2,9.8" fill="#4c8a1e"/><polygon points="3,8.3 4.6,9.2 4.6,10.5 3,9.6" fill="#b9e83a"/></svg>
<div class="t" style="left:39.5px;top:3px;color:#0c0c0c">Все устройства</div>
<svg style="position:absolute;left:22px;top:31px" width="10" height="6" viewBox="0 0 10 6"><polygon points="0,0 9.2,0 4.6,5.4" fill="#787878"/></svg>
<svg style="position:absolute;left:35.5px;top:28.5px" width="15.5" height="10" viewBox="0 0 15.5 10"><rect x="0" y="1" width="15.5" height="8.6" rx="1.4" fill="url(#gGry)"/><rect x="1" y="0.2" width="13.5" height="1.6" rx="0.8" fill="#dcdcdc"/><rect x="1.6" y="3" width="1.4" height="1.3" fill="#333"/><rect x="3.8" y="3" width="1.4" height="1.3" fill="#333"/><rect x="6" y="3" width="1.4" height="1.3" fill="#333"/><rect x="1.6" y="6" width="6" height="1.1" fill="#555"/><circle cx="11.8" cy="5.5" r="2.3" fill="#777"/><circle cx="11.8" cy="5.5" r="1.4" fill="#e8e8e8"/></svg>
<svg style="position:absolute;left:55px;top:26px" width="12" height="16" viewBox="0 0 12 16"><rect x="3.2" y="0" width="1.6" height="4" fill="#c5a3d6"/><rect x="7.2" y="0" width="1.6" height="4" fill="#c5a3d6"/><path d="M1.4 4 H10.6 V7 a4.6 3.6 0 0 1 -9.2 0 Z" fill="url(#gPur)"/><path d="M6 10.5 C6 13 4 12 3 13.2 C2 14.4 1 14.6 0 15.8" stroke="#9a6fb0" stroke-width="1" fill="none"/></svg>
<div class="t" style="left:71px;top:25px;color:#d8d8d8">ixbt</div>
<svg style="position:absolute;left:51.5px;top:51px" width="16" height="8.4" viewBox="0 0 16 8.4"><rect x="0" y="0.6" width="11" height="7.4" rx="1" fill="url(#gGry)"/><rect x="1.4" y="2.2" width="5" height="0.9" fill="#aaa"/><rect x="7.4" y="4.6" width="1.8" height="1.8" fill="#ff2a1a"/><polygon points="11.2,2.6 13,1 13,7.6 11.2,6" fill="#0a0a0a"/><rect x="13.4" y="0.6" width="2.2" height="7.4" fill="#050505"/></svg>
<div class="t" style="left:71px;top:47px;color:#e4e4e4">CAM1</div>
<svg style="position:absolute;left:51.5px;top:73px" width="16" height="8.4" viewBox="0 0 16 8.4"><rect x="0" y="0.6" width="11" height="7.4" rx="1" fill="url(#gGry)"/><rect x="1.4" y="2.2" width="5" height="0.9" fill="#aaa"/><rect x="7.4" y="4.6" width="1.8" height="1.8" fill="#ff2a1a"/><polygon points="11.2,2.6 13,1 13,7.6 11.2,6" fill="#0a0a0a"/><rect x="13.4" y="0.6" width="2.2" height="7.4" fill="#050505"/></svg>
<div class="t" style="left:71px;top:69px;color:#7c7c7c">CAM2</div>
<svg style="position:absolute;left:51.5px;top:95px" width="16" height="8.4" viewBox="0 0 16 8.4"><rect x="0" y="0.6" width="11" height="7.4" rx="1" fill="url(#gGry)"/><rect x="1.4" y="2.2" width="5" height="0.9" fill="#aaa"/><rect x="7.4" y="4.6" width="1.8" height="1.8" fill="#ff2a1a"/><polygon points="11.2,2.6 13,1 13,7.6 11.2,6" fill="#0a0a0a"/><rect x="13.4" y="0.6" width="2.2" height="7.4" fill="#050505"/></svg>
<div class="t" style="left:71px;top:91px;color:#7c7c7c">CAM3</div>
<svg style="position:absolute;left:51.5px;top:117px" width="16" height="8.4" viewBox="0 0 16 8.4"><rect x="0" y="0.6" width="11" height="7.4" rx="1" fill="url(#gGry)"/><rect x="1.4" y="2.2" width="5" height="0.9" fill="#aaa"/><rect x="7.4" y="4.6" width="1.8" height="1.8" fill="#ff2a1a"/><polygon points="11.2,2.6 13,1 13,7.6 11.2,6" fill="#0a0a0a"/><rect x="13.4" y="0.6" width="2.2" height="7.4" fill="#050505"/></svg>
<div class="t" style="left:71px;top:113px;color:#7c7c7c">CAM4</div>
<svg style="position:absolute;left:51.5px;top:139px" width="16" height="8.4" viewBox="0 0 16 8.4"><rect x="0" y="0.6" width="11" height="7.4" rx="1" fill="url(#gGry)"/><rect x="1.4" y="2.2" width="5" height="0.9" fill="#aaa"/><rect x="7.4" y="4.6" width="1.8" height="1.8" fill="#ff2a1a"/><polygon points="11.2,2.6 13,1 13,7.6 11.2,6" fill="#0a0a0a"/><rect x="13.4" y="0.6" width="2.2" height="7.4" fill="#050505"/></svg>
<div class="t" style="left:71px;top:135px;color:#7c7c7c">CAM5</div>
<svg style="position:absolute;left:51.5px;top:161px" width="16" height="8.4" viewBox="0 0 16 8.4"><rect x="0" y="0.6" width="11" height="7.4" rx="1" fill="url(#gGry)"/><rect x="1.4" y="2.2" width="5" height="0.9" fill="#aaa"/><rect x="7.4" y="4.6" width="1.8" height="1.8" fill="#ff2a1a"/><polygon points="11.2,2.6 13,1 13,7.6 11.2,6" fill="#0a0a0a"/><rect x="13.4" y="0.6" width="2.2" height="7.4" fill="#050505"/></svg>
<div class="t" style="left:71px;top:157px;color:#7c7c7c">CAM6</div>
<svg style="position:absolute;left:51.5px;top:183px" width="16" height="8.4" viewBox="0 0 16 8.4"><rect x="0" y="0.6" width="11" height="7.4" rx="1" fill="url(#gGry)"/><rect x="1.4" y="2.2" width="5" height="0.9" fill="#aaa"/><rect x="7.4" y="4.6" width="1.8" height="1.8" fill="#ff2a1a"/><polygon points="11.2,2.6 13,1 13,7.6 11.2,6" fill="#0a0a0a"/><rect x="13.4" y="0.6" width="2.2" height="7.4" fill="#050505"/></svg>
<div class="t" style="left:71px;top:179px;color:#7c7c7c">CAM7</div>
<svg style="position:absolute;left:51.5px;top:205px" width="16" height="8.4" viewBox="0 0 16 8.4"><rect x="0" y="0.6" width="11" height="7.4" rx="1" fill="url(#gGry)"/><rect x="1.4" y="2.2" width="5" height="0.9" fill="#aaa"/><rect x="7.4" y="4.6" width="1.8" height="1.8" fill="#ff2a1a"/><polygon points="11.2,2.6 13,1 13,7.6 11.2,6" fill="#0a0a0a"/><rect x="13.4" y="0.6" width="2.2" height="7.4" fill="#050505"/></svg>
<div class="t" style="left:71px;top:201px;color:#7c7c7c">CAM8</div>
<svg style="position:absolute;left:51.5px;top:227px" width="16" height="8.4" viewBox="0 0 16 8.4"><rect x="0" y="0.6" width="11" height="7.4" rx="1" fill="url(#gGry)"/><rect x="1.4" y="2.2" width="5" height="0.9" fill="#aaa"/><rect x="7.4" y="4.6" width="1.8" height="1.8" fill="#ff2a1a"/><polygon points="11.2,2.6 13,1 13,7.6 11.2,6" fill="#0a0a0a"/><rect x="13.4" y="0.6" width="2.2" height="7.4" fill="#050505"/></svg>
<div class="t" style="left:71px;top:223px;color:#7c7c7c">CAM9</div>
<svg style="position:absolute;left:51.5px;top:249px" width="16" height="8.4" viewBox="0 0 16 8.4"><rect x="0" y="0.6" width="11" height="7.4" rx="1" fill="url(#gGry)"/><rect x="1.4" y="2.2" width="5" height="0.9" fill="#aaa"/><rect x="7.4" y="4.6" width="1.8" height="1.8" fill="#ff2a1a"/><polygon points="11.2,2.6 13,1 13,7.6 11.2,6" fill="#0a0a0a"/><rect x="13.4" y="0.6" width="2.2" height="7.4" fill="#050505"/></svg>
<div class="t" style="left:71px;top:245px;color:#7c7c7c">CAM10</div>
<svg style="position:absolute;left:51.5px;top:271px" width="16" height="8.4" viewBox="0 0 16 8.4"><rect x="0" y="0.6" width="11" height="7.4" rx="1" fill="url(#gGry)"/><rect x="1.4" y="2.2" width="5" height="0.9" fill="#aaa"/><rect x="7.4" y="4.6" width="1.8" height="1.8" fill="#ff2a1a"/><polygon points="11.2,2.6 13,1 13,7.6 11.2,6" fill="#0a0a0a"/><rect x="13.4" y="0.6" width="2.2" height="7.4" fill="#050505"/></svg>
<div class="t" style="left:71px;top:267px;color:#7c7c7c">CAM11</div>
<svg style="position:absolute;left:51.5px;top:293px" width="16" height="8.4" viewBox="0 0 16 8.4"><rect x="0" y="0.6" width="11" height="7.4" rx="1" fill="url(#gGry)"/><rect x="1.4" y="2.2" width="5" height="0.9" fill="#aaa"/><rect x="7.4" y="4.6" width="1.8" height="1.8" fill="#ff2a1a"/><polygon points="11.2,2.6 13,1 13,7.6 11.2,6" fill="#0a0a0a"/><rect x="13.4" y="0.6" width="2.2" height="7.4" fill="#050505"/></svg>
<div class="t" style="left:71px;top:289px;color:#7c7c7c">CAM12</div>
<svg style="position:absolute;left:51.5px;top:315px" width="16" height="8.4" viewBox="0 0 16 8.4"><rect x="0" y="0.6" width="11" height="7.4" rx="1" fill="url(#gGry)"/><rect x="1.4" y="2.2" width="5" height="0.9" fill="#aaa"/><rect x="7.4" y="4.6" width="1.8" height="1.8" fill="#ff2a1a"/><polygon points="11.2,2.6 13,1 13,7.6 11.2,6" fill="#0a0a0a"/><rect x="13.4" y="0.6" width="2.2" height="7.4" fill="#050505"/></svg>
<div class="t" style="left:71px;top:311px;color:#7c7c7c">CAM13</div>
<svg style="position:absolute;left:51.5px;top:337px" width="16" height="8.4" viewBox="0 0 16 8.4"><rect x="0" y="0.6" width="11" height="7.4" rx="1" fill="url(#gGry)"/><rect x="1.4" y="2.2" width="5" height="0.9" fill="#aaa"/><rect x="7.4" y="4.6" width="1.8" height="1.8" fill="#ff2a1a"/><polygon points="11.2,2.6 13,1 13,7.6 11.2,6" fill="#0a0a0a"/><rect x="13.4" y="0.6" width="2.2" height="7.4" fill="#050505"/></svg>
<div class="t" style="left:71px;top:333px;color:#7c7c7c">CAM14</div>
<svg style="position:absolute;left:51.5px;top:359px" width="16" height="8.4" viewBox="0 0 16 8.4"><rect x="0" y="0.6" width="11" height="7.4" rx="1" fill="url(#gGry)"/><rect x="1.4" y="2.2" width="5" height="0.9" fill="#aaa"/><rect x="7.4" y="4.6" width="1.8" height="1.8" fill="#ff2a1a"/><polygon points="11.2,2.6 13,1 13,7.6 11.2,6" fill="#0a0a0a"/><rect x="13.4" y="0.6" width="2.2" height="7.4" fill="#050505"/></svg>
<div class="t" style="left:71px;top:355px;color:#7c7c7c">CAM15</div>
<svg style="position:absolute;left:51.5px;top:381px" width="16" height="8.4" viewBox="0 0 16 8.4"><rect x="0" y="0.6" width="11" height="7.4" rx="1" fill="url(#gGry)"/><rect x="1.4" y="2.2" width="5" height="0.9" fill="#aaa"/><rect x="7.4" y="4.6" width="1.8" height="1.8" fill="#ff2a1a"/><polygon points="11.2,2.6 13,1 13,7.6 11.2,6" fill="#0a0a0a"/><rect x="13.4" y="0.6" width="2.2" height="7.4" fill="#050505"/></svg>
<div class="t" style="left:71px;top:377px;color:#7c7c7c">CAM16</div>
<svg style="position:absolute;left:51.5px;top:403px" width="16" height="8.4" viewBox="0 0 16 8.4"><rect x="0" y="0.6" width="11" height="7.4" rx="1" fill="url(#gGry)"/><rect x="1.4" y="2.2" width="5" height="0.9" fill="#aaa"/><rect x="7.4" y="4.6" width="1.8" height="1.8" fill="#ff2a1a"/><polygon points="11.2,2.6 13,1 13,7.6 11.2,6" fill="#0a0a0a"/><rect x="13.4" y="0.6" width="2.2" height="7.4" fill="#050505"/></svg>
<div class="t" style="left:71px;top:399px;color:#7c7c7c">CAM17</div>
<svg style="position:absolute;left:51.5px;top:425px" width="16" height="8.4" viewBox="0 0 16 8.4"><rect x="0" y="0.6" width="11" height="7.4" rx="1" fill="url(#gGry)"/><rect x="1.4" y="2.2" width="5" height="0.9" fill="#aaa"/><rect x="7.4" y="4.6" width="1.8" height="1.8" fill="#ff2a1a"/><polygon points="11.2,2.6 13,1 13,7.6 11.2,6" fill="#0a0a0a"/><rect x="13.4" y="0.6" width="2.2" height="7.4" fill="#050505"/></svg>
<div class="t" style="left:71px;top:421px;color:#7c7c7c">CAM18</div>
</div>
<div style="position:absolute;left:1893px;top:123px;width:17px;height:430px;background:linear-gradient(90deg,#5a5a5a,#6a6a6a 50%,#707070)"></div>
<div style="position:absolute;left:1893px;top:123px;width:17px;height:16px;background:linear-gradient(#7e7e7e,#747474)"></div>
<svg style="position:absolute;left:1897px;top:129px;" width="9" height="6" viewBox="0 0 9 6"><polygon points="4.5,0 9,5 0,5" fill="#050505"/></svg>
<div style="position:absolute;left:1893px;top:536px;width:17px;height:17px;background:linear-gradient(#868686,#727272);border:1px solid #7c7c7c"></div>
<svg style="position:absolute;left:1897px;top:542px;" width="9" height="6" viewBox="0 0 9 6"><polygon points="0,0 9,0 4.5,5" fill="#050505"/></svg>
<div style="position:absolute;left:1894.5px;top:140.5px;width:14px;height:53px;background:linear-gradient(90deg,#a0a0a0,#acacac 45%,#9a9a9a);border:1px solid #b2b2b2;border-radius:3px"></div>
<div style="position:absolute;left:1898px;top:163px;width:6px;height:1px;background:#666"></div>
<div style="position:absolute;left:1898px;top:166px;width:6px;height:1px;background:#666"></div>
<div style="position:absolute;left:1898px;top:169px;width:6px;height:1px;background:#666"></div>
<div style="position:absolute;left:1619px;top:533px;width:2px;height:2px;background:#5a5a5a"></div>
<div style="position:absolute;left:1619px;top:539px;width:2px;height:2px;background:#5a5a5a"></div>
<div style="position:absolute;left:1619px;top:545px;width:2px;height:2px;background:#5a5a5a"></div>
<div style="position:absolute;left:1619px;top:551px;width:2px;height:2px;background:#5a5a5a"></div>
<div style="position:absolute;left:1619px;top:557px;width:2px;height:2px;background:#5a5a5a"></div>
<div style="position:absolute;left:1619px;top:563px;width:2px;height:2px;background:#5a5a5a"></div>
<div style="position:absolute;left:1755px;top:566px;width:2px;height:2px;background:#5a5a5a"></div>
<div style="position:absolute;left:1761px;top:566px;width:2px;height:2px;background:#5a5a5a"></div>
<div style="position:absolute;left:1767px;top:566px;width:2px;height:2px;background:#5a5a5a"></div>
<div style="position:absolute;left:1773px;top:566px;width:2px;height:2px;background:#5a5a5a"></div>
<div style="position:absolute;left:1779px;top:566px;width:2px;height:2px;background:#5a5a5a"></div>
<div style="position:absolute;left:1785px;top:566px;width:2px;height:2px;background:#5a5a5a"></div>
<div style="position:absolute;left:1755px;top:892px;width:2px;height:2px;background:#5a5a5a"></div>
<div style="position:absolute;left:1761px;top:892px;width:2px;height:2px;background:#5a5a5a"></div>
<div style="position:absolute;left:1767px;top:892px;width:2px;height:2px;background:#5a5a5a"></div>
<div style="position:absolute;left:1773px;top:892px;width:2px;height:2px;background:#5a5a5a"></div>
<div style="position:absolute;left:1779px;top:892px;width:2px;height:2px;background:#5a5a5a"></div>
<div style="position:absolute;left:1785px;top:892px;width:2px;height:2px;background:#5a5a5a"></div>
<div class="t" style="left:1643.80px;top:580px;font-size:13px;color:#2ab8c8;letter-spacing:-0.117px;">событие</div>
<svg style="position:absolute;left:1860px;top:572px;" width="50" height="30" viewBox="0 0 50 30"><path d="M1 0.5 H42 Q49.5 0.5 49.5 8 V30 Z" fill="#222"/><path d="M27.4 8.6 L30.2 7.2 L34 13.6 L41.6 5 L44.4 6.4 L34 19 Z" fill="#d9481a"/><path d="M27.4 8.6 L30.2 7.2 L34 13.6 L34 19 Z" fill="#ef5a22"/></svg>
<div style="position:absolute;left:1628px;top:603px;width:282px;height:19px;background:linear-gradient(#555,#474747);border-top:1px solid #5e5e5e;border-bottom:1px solid #3a3a3a"></div>
<div class="t" style="left:1633.83px;top:605px;font-size:12px;color:#d4d4d4;letter-spacing:-0.020px;">Событие</div>
<div class="t" style="left:1721.58px;top:605px;font-size:12px;color:#d4d4d4;letter-spacing:-0.278px;">Сайт</div>
<div class="t" style="left:1809.58px;top:605px;font-size:12px;color:#d4d4d4;letter-spacing:0.030px;">время</div>
<div style="position:absolute;left:1715px;top:605px;width:1px;height:15px;background:#3c3c3c"></div>
<div style="position:absolute;left:1716px;top:605px;width:1px;height:15px;background:#606060"></div>
<div style="position:absolute;left:1802px;top:605px;width:1px;height:15px;background:#3c3c3c"></div>
<div style="position:absolute;left:1803px;top:605px;width:1px;height:15px;background:#606060"></div>
<div style="position:absolute;left:1890px;top:605px;width:1px;height:15px;background:#3c3c3c"></div>
<div style="position:absolute;left:1891px;top:605px;width:1px;height:15px;background:#606060"></div>
<div style="position:absolute;left:1628px;top:622px;width:282px;height:258px;background:#333333"></div>
<svg style="position:absolute;left:1633px;top:625.5px;" width="12" height="16" viewBox="0 0 12 16"><rect x="3.2" y="0" width="1.6" height="4" fill="#c5a3d6"/><rect x="7.2" y="0" width="1.6" height="4" fill="#c5a3d6"/><path d="M1.4 4 H10.6 V7 a4.6 3.6 0 0 1 -9.2 0 Z" fill="url(#gPur)"/><path d="M6 10.5 C6 13 4 12 3 13.2 C2 14.4 1 14.6 0 15.8" stroke="#9a6fb0" stroke-width="1" fill="none"/></svg>
<div class="t" style="left:1650.62px;top:624px;font-size:11px;color:#f0f0f0;letter-spacing:1.301px;-webkit-text-stroke:0.22px #f0f0f0">ixbt</div>
<div class="t" style="left:1718.62px;top:624px;font-size:11px;color:#f0f0f0;letter-spacing:1.301px;-webkit-text-stroke:0.22px #f0f0f0">ixbt</div>
<div class="t" style="left:1807.12px;top:624px;font-size:11px;color:#f0f0f0;letter-spacing:0.206px;-webkit-text-stroke:0.22px #f0f0f0">12/09 11:46:16</div>
<div class="t" style="left:1644.06px;top:907px;font-size:12.5px;color:#2ab8c8;letter-spacing:-0.240px;;font-weight:bold">Всплывающие меню</div>
<svg style="position:absolute;left:1889.5px;top:911px;" width="10" height="6" viewBox="0 0 10 6"><polygon points="0,0 9.6,0 4.8,5.4" fill="#c8c8c8"/></svg>
<div style="position:absolute;left:1628px;top:930px;width:282px;height:19px;background:linear-gradient(#555,#474747);border-top:1px solid #5e5e5e;border-bottom:1px solid #3a3a3a"></div>
<div class="t" style="left:1633.83px;top:932px;font-size:12px;color:#d4d4d4;letter-spacing:0.026px;">камера</div>
<div class="t" style="left:1765.33px;top:932px;font-size:12px;color:#d4d4d4;letter-spacing:0.146px;">Устройство</div>
<div style="position:absolute;left:1758px;top:932px;width:1px;height:15px;background:#3c3c3c"></div>
<div style="position:absolute;left:1759px;top:932px;width:1px;height:15px;background:#606060"></div>
<div style="position:absolute;left:1890px;top:932px;width:1px;height:15px;background:#3c3c3c"></div>
<div style="position:absolute;left:1891px;top:932px;width:1px;height:15px;background:#606060"></div>
<div style="position:absolute;left:1628px;top:949px;width:282px;height:74px;background:#333333"></div>
<svg style="position:absolute;left:1910px;top:1030px;" width="10" height="10" viewBox="0 0 10 10"><polygon points="10,0 10,10 0,10" fill="#686868"/></svg>
<div style="position:absolute;left:21px;top:993px;width:24px;height:24px;background:#3d3d3d;border:1px solid #565656;border-radius:3px"></div>
<svg style="position:absolute;left:25px;top:997px;" width="16" height="18" viewBox="0 0 16 18"><defs><radialGradient id="gUsr" cx="0.42" cy="0.3" r="0.8"><stop offset="0" stop-color="#ffffff"/><stop offset="0.25" stop-color="#b99cf0"/><stop offset="0.7" stop-color="#7a4fd0"/><stop offset="1" stop-color="#5a2cb0"/></radialGradient><linearGradient id="gUb" x1="0" y1="0" x2="0" y2="1"><stop offset="0" stop-color="#c9b4f6"/><stop offset="0.5" stop-color="#9a78e4"/><stop offset="1" stop-color="#6f42cc"/></linearGradient></defs><rect x="0.2" y="0" width="14.8" height="15" fill="#0e4a74"/><rect x="1" y="0.9" width="6.1" height="6.1" fill="#9be7fb"/><rect x="7.9" y="0.9" width="6.3" height="6.1" fill="#9be7fb"/><rect x="1" y="7.8" width="6.1" height="6.3" fill="#8fe2f9"/><rect x="7.9" y="7.8" width="6.3" height="6.3" fill="#8fe2f9"/><path d="M5 17 C5 12.6 7.6 11.6 9.6 11.2 C11.6 11.6 15.4 12.6 15.4 17 Z" fill="url(#gUb)"/><circle cx="9.7" cy="7.8" r="3.3" fill="url(#gUsr)"/></svg>
<div style="position:absolute;left:51px;top:993px;width:329px;height:24px;background:#3d3d3d;border:1px solid #565656;border-radius:3px"></div>
<svg style="position:absolute;left:56px;top:997px;" width="16" height="16" viewBox="0 0 16 16"><rect x="0" y="0" width="16" height="16" fill="#0d5076"/><rect x="1" y="1" width="14" height="14" fill="url(#gCy)"/></svg>
<svg style="position:absolute;left:80px;top:997px;" width="16" height="16" viewBox="0 0 16 16"><rect x="0" y="0" width="16" height="16" fill="#0d5076"/><rect x="1" y="1" width="6.5" height="6.5" fill="url(#gCy)"/><rect x="8.5" y="1" width="6.5" height="6.5" fill="url(#gCy)"/><rect x="1" y="8.5" width="6.5" height="6.5" fill="url(#gCy)"/><rect x="8.5" y="8.5" width="6.5" height="6.5" fill="url(#gCy)"/></svg>
<svg style="position:absolute;left:104px;top:997px;" width="16" height="16" viewBox="0 0 16 16"><rect x="0" y="0" width="16" height="16" fill="#0d5076"/><rect x="1" y="1" width="4" height="4" fill="url(#gCy)"/><rect x="6" y="1" width="4" height="4" fill="url(#gCy)"/><rect x="11" y="1" width="4" height="4" fill="url(#gCy)"/><rect x="1" y="6" width="4" height="4" fill="url(#gCy)"/><rect x="6" y="6" width="4" height="4" fill="url(#gCy)"/><rect x="11" y="6" width="4" height="4" fill="url(#gCy)"/><rect x="1" y="11" width="4" height="4" fill="url(#gCy)"/><rect x="6" y="11" width="4" height="4" fill="url(#gCy)"/><rect x="11" y="11" width="4" height="4" fill="url(#gCy)"/></svg>
<svg style="position:absolute;left:128px;top:997px;" width="16" height="16" viewBox="0 0 16 16"><rect x="0" y="0" width="16" height="16" fill="#0d5076"/><rect x="1" y="1" width="3" height="3" fill="url(#gCy)"/><rect x="5" y="1" width="3" height="3" fill="url(#gCy)"/><rect x="9" y="1" width="3" height="3" fill="url(#gCy)"/><rect x="13" y="1" width="2" height="3" fill="url(#gCy)"/><rect x="1" y="5" width="3" height="3" fill="url(#gCy)"/><rect x="5" y="5" width="3" height="3" fill="url(#gCy)"/><rect x="9" y="5" width="3" height="3" fill="url(#gCy)"/><rect x="13" y="5" width="2" height="3" fill="url(#gCy)"/><rect x="1" y="9" width="3" height="3" fill="url(#gCy)"/><rect x="5" y="9" width="3" height="3" fill="url(#gCy)"/><rect x="9" y="9" width="3" height="3" fill="url(#gCy)"/><rect x="13" y="9" width="2" height="3" fill="url(#gCy)"/><rect x="1" y="13" width="3" height="2" fill="url(#gCy)"/><rect x="5" y="13" width="3" height="2" fill="url(#gCy)"/><rect x="9" y="13" width="3" height="2" fill="url(#gCy)"/><rect x="13" y="13" width="2" height="2" fill="url(#gCy)"/></svg>
<svg style="position:absolute;left:152px;top:997px;" width="16" height="16" viewBox="0 0 16 16"><rect x="0" y="0" width="16" height="16" fill="#0d5076"/><rect x="1" y="1" width="2" height="2" fill="url(#gCy)"/><rect x="4" y="1" width="2" height="2" fill="url(#gCy)"/><rect x="7" y="1" width="2" height="2" fill="url(#gCy)"/><rect x="10" y="1" width="2" height="2" fill="url(#gCy)"/><rect x="13" y="1" width="2" height="2" fill="url(#gCy)"/><rect x="1" y="4" width="2" height="2" fill="url(#gCy)"/><rect x="4" y="4" width="2" height="2" fill="url(#gCy)"/><rect x="7" y="4" width="2" height="2" fill="url(#gCy)"/><rect x="10" y="4" width="2" height="2" fill="url(#gCy)"/><rect x="13" y="4" width="2" height="2" fill="url(#gCy)"/><rect x="1" y="7" width="2" height="2" fill="url(#gCy)"/><rect x="4" y="7" width="2" height="2" fill="url(#gCy)"/><rect x="7" y="7" width="2" height="2" fill="url(#gCy)"/><rect x="10" y="7" width="2" height="2" fill="url(#gCy)"/><rect x="13" y="7" width="2" height="2" fill="url(#gCy)"/><rect x="1" y="10" width="2" height="2" fill="url(#gCy)"/><rect x="4" y="10" width="2" height="2" fill="url(#gCy)"/><rect x="7" y="10" width="2" height="2" fill="url(#gCy)"/><rect x="10" y="10" width="2" height="2" fill="url(#gCy)"/><rect x="13" y="10" width="2" height="2" fill="url(#gCy)"/><rect x="1" y="13" width="2" height="2" fill="url(#gCy)"/><rect x="4" y="13" width="2" height="2" fill="url(#gCy)"/><rect x="7" y="13" width="2" height="2" fill="url(#gCy)"/><rect x="10" y="13" width="2" height="2" fill="url(#gCy)"/><rect x="13" y="13" width="2" height="2" fill="url(#gCy)"/></svg>
<svg style="position:absolute;left:176px;top:997px;" width="16" height="16" viewBox="0 0 16 16"><rect x="0" y="0" width="16" height="16" fill="#0d5076"/><rect x="1" y="1" width="2" height="2" fill="url(#gCy)"/><rect x="4" y="1" width="2" height="2" fill="url(#gCy)"/><rect x="7" y="1" width="1" height="2" fill="url(#gCy)"/><rect x="9" y="1" width="1" height="2" fill="url(#gCy)"/><rect x="11" y="1" width="1" height="2" fill="url(#gCy)"/><rect x="13" y="1" width="2" height="2" fill="url(#gCy)"/><rect x="1" y="4" width="2" height="2" fill="url(#gCy)"/><rect x="4" y="4" width="2" height="2" fill="url(#gCy)"/><rect x="7" y="4" width="1" height="2" fill="url(#gCy)"/><rect x="9" y="4" width="1" height="2" fill="url(#gCy)"/><rect x="11" y="4" width="1" height="2" fill="url(#gCy)"/><rect x="13" y="4" width="2" height="2" fill="url(#gCy)"/><rect x="1" y="7" width="2" height="1" fill="url(#gCy)"/><rect x="4" y="7" width="2" height="1" fill="url(#gCy)"/><rect x="7" y="7" width="1" height="1" fill="url(#gCy)"/><rect x="9" y="7" width="1" height="1" fill="url(#gCy)"/><rect x="11" y="7" width="1" height="1" fill="url(#gCy)"/><rect x="13" y="7" width="2" height="1" fill="url(#gCy)"/><rect x="1" y="9" width="2" height="1" fill="url(#gCy)"/><rect x="4" y="9" width="2" height="1" fill="url(#gCy)"/><rect x="7" y="9" width="1" height="1" fill="url(#gCy)"/><rect x="9" y="9" width="1" height="1" fill="url(#gCy)"/><rect x="11" y="9" width="1" height="1" fill="url(#gCy)"/><rect x="13" y="9" width="2" height="1" fill="url(#gCy)"/><rect x="1" y="11" width="2" height="1" fill="url(#gCy)"/><rect x="4" y="11" width="2" height="1" fill="url(#gCy)"/><rect x="7" y="11" width="1" height="1" fill="url(#gCy)"/><rect x="9" y="11" width="1" height="1" fill="url(#gCy)"/><rect x="11" y="11" width="1" height="1" fill="url(#gCy)"/><rect x="13" y="11" width="2" height="1" fill="url(#gCy)"/><rect x="1" y="13" width="2" height="2" fill="url(#gCy)"/><rect x="4" y="13" width="2" height="2" fill="url(#gCy)"/><rect x="7" y="13" width="1" height="2" fill="url(#gCy)"/><rect x="9" y="13" width="1" height="2" fill="url(#gCy)"/><rect x="11" y="13" width="1" height="2" fill="url(#gCy)"/><rect x="13" y="13" width="2" height="2" fill="url(#gCy)"/></svg>
<svg style="position:absolute;left:200px;top:997px;" width="16" height="16" viewBox="0 0 16 16"><rect x="0" y="0" width="16" height="16" fill="#0d5076"/><rect x="1" y="1" width="14" height="14" fill="url(#gCy)"/><text x="8" y="12.6" font-family="Liberation Sans, sans-serif" font-size="12" text-anchor="middle" fill="#14587e" stroke="#14587e" stroke-width="0.35" textLength="12.6" lengthAdjust="spacingAndGlyphs">49</text></svg>
<svg style="position:absolute;left:224px;top:997px;" width="16" height="16" viewBox="0 0 16 16"><rect x="0" y="0" width="16" height="16" fill="#0d5076"/><rect x="1" y="1" width="14" height="14" fill="url(#gCy)"/><text x="8" y="12.6" font-family="Liberation Sans, sans-serif" font-size="12" text-anchor="middle" fill="#14587e" stroke="#14587e" stroke-width="0.35" textLength="12.6" lengthAdjust="spacingAndGlyphs">64</text></svg>
<svg style="position:absolute;left:248px;top:997px;" width="16" height="16" viewBox="0 0 16 16"><rect x="0" y="0" width="16" height="16" fill="#0d5076"/><rect x="1" y="1" width="9" height="9" fill="url(#gCy)"/><rect x="11" y="1" width="4" height="4" fill="url(#gCy)"/><rect x="11" y="6" width="4" height="4" fill="url(#gCy)"/><rect x="1" y="11" width="4" height="4" fill="url(#gCy)"/><rect x="6" y="11" width="4" height="4" fill="url(#gCy)"/><rect x="11" y="11" width="4" height="4" fill="url(#gCy)"/></svg>
<svg style="position:absolute;left:272px;top:997px;" width="16" height="16" viewBox="0 0 16 16"><rect x="0" y="0" width="16" height="16" fill="#0d5076"/><rect x="1" y="1" width="6" height="6" fill="url(#gCy)"/><rect x="8" y="1" width="7" height="6" fill="url(#gCy)"/><rect x="1" y="8" width="6" height="7" fill="url(#gCy)"/><rect x="8" y="8" width="3" height="3" fill="url(#gCy)"/><rect x="12" y="8" width="3" height="3" fill="url(#gCy)"/><rect x="8" y="12" width="3" height="3" fill="url(#gCy)"/><rect x="12" y="12" width="3" height="3" fill="url(#gCy)"/></svg>
<svg style="position:absolute;left:296px;top:997px;" width="16" height="16" viewBox="0 0 16 16"><rect x="0" y="0" width="16" height="16" fill="#0d5076"/><rect x="1" y="1" width="11" height="11" fill="url(#gCy)"/><rect x="13" y="1" width="2" height="2" fill="url(#gCy)"/><rect x="13" y="4" width="2" height="2" fill="url(#gCy)"/><rect x="13" y="7" width="2" height="2" fill="url(#gCy)"/><rect x="13" y="10" width="2" height="2" fill="url(#gCy)"/><rect x="13" y="13" width="2" height="2" fill="url(#gCy)"/><rect x="1" y="13" width="2" height="2" fill="url(#gCy)"/><rect x="4" y="13" width="2" height="2" fill="url(#gCy)"/><rect x="7" y="13" width="2" height="2" fill="url(#gCy)"/><rect x="10" y="13" width="2" height="2" fill="url(#gCy)"/></svg>
<svg style="position:absolute;left:320px;top:997px;" width="16" height="16" viewBox="0 0 16 16"><rect x="0" y="0" width="16" height="16" fill="#0d5076"/><rect x="1" y="1" width="3" height="3" fill="url(#gCy)"/><rect x="5" y="1" width="3" height="3" fill="url(#gCy)"/><rect x="9" y="1" width="3" height="3" fill="url(#gCy)"/><rect x="13" y="1" width="2" height="3" fill="url(#gCy)"/><rect x="1" y="5" width="3" height="3" fill="url(#gCy)"/><rect x="13" y="5" width="2" height="3" fill="url(#gCy)"/><rect x="1" y="9" width="3" height="3" fill="url(#gCy)"/><rect x="13" y="9" width="2" height="3" fill="url(#gCy)"/><rect x="1" y="13" width="3" height="2" fill="url(#gCy)"/><rect x="5" y="13" width="3" height="2" fill="url(#gCy)"/><rect x="9" y="13" width="3" height="2" fill="url(#gCy)"/><rect x="13" y="13" width="2" height="2" fill="url(#gCy)"/><rect x="5" y="5" width="7" height="7" fill="url(#gCy)"/></svg>
<svg style="position:absolute;left:344px;top:997px;" width="16" height="16" viewBox="0 0 16 16"><rect x="0" y="0" width="16" height="16" fill="#0d5076"/><rect x="1" y="1" width="2" height="2" fill="url(#gCy)"/><rect x="4" y="1" width="2" height="2" fill="url(#gCy)"/><rect x="7" y="1" width="1" height="2" fill="url(#gCy)"/><rect x="9" y="1" width="1" height="2" fill="url(#gCy)"/><rect x="11" y="1" width="1" height="2" fill="url(#gCy)"/><rect x="13" y="1" width="2" height="2" fill="url(#gCy)"/><rect x="1" y="4" width="2" height="2" fill="url(#gCy)"/><rect x="4" y="4" width="2" height="2" fill="url(#gCy)"/><rect x="7" y="4" width="1" height="2" fill="url(#gCy)"/><rect x="9" y="4" width="1" height="2" fill="url(#gCy)"/><rect x="11" y="4" width="1" height="2" fill="url(#gCy)"/><rect x="13" y="4" width="2" height="2" fill="url(#gCy)"/><rect x="1" y="7" width="2" height="1" fill="url(#gCy)"/><rect x="4" y="7" width="2" height="1" fill="url(#gCy)"/><rect x="11" y="7" width="1" height="1" fill="url(#gCy)"/><rect x="13" y="7" width="2" height="1" fill="url(#gCy)"/><rect x="1" y="9" width="2" height="1" fill="url(#gCy)"/><rect x="4" y="9" width="2" height="1" fill="url(#gCy)"/><rect x="11" y="9" width="1" height="1" fill="url(#gCy)"/><rect x="13" y="9" width="2" height="1" fill="url(#gCy)"/><rect x="1" y="11" width="2" height="1" fill="url(#gCy)"/><rect x="4" y="11" width="2" height="1" fill="url(#gCy)"/><rect x="7" y="11" width="1" height="1" fill="url(#gCy)"/><rect x="9" y="11" width="1" height="1" fill="url(#gCy)"/><rect x="11" y="11" width="1" height="1" fill="url(#gCy)"/><rect x="13" y="11" width="2" height="1" fill="url(#gCy)"/><rect x="1" y="13" width="2" height="2" fill="url(#gCy)"/><rect x="4" y="13" width="2" height="2" fill="url(#gCy)"/><rect x="7" y="13" width="1" height="2" fill="url(#gCy)"/><rect x="9" y="13" width="1" height="2" fill="url(#gCy)"/><rect x="11" y="13" width="1" height="2" fill="url(#gCy)"/><rect x="13" y="13" width="2" height="2" fill="url(#gCy)"/><rect x="7" y="7" width="3" height="3" fill="url(#gCy)"/></svg>
<div style="position:absolute;left:364px;top:994px;width:1px;height:22px;background:#2c2c2c"></div>
<div style="position:absolute;left:365px;top:994px;width:1px;height:22px;background:#4c4c4c"></div>
<svg style="position:absolute;left:368px;top:1001.5px;" width="7" height="6" viewBox="0 0 7 6"><polygon points="3.5,0 7,5.6 0,5.6" fill="#282828"/></svg>
<div style="position:absolute;left:385px;top:993px;width:74px;height:24px;background:#3d3d3d;border:1px solid #565656;border-radius:3px"></div>
<svg style="position:absolute;left:390px;top:997px;" width="16" height="16" viewBox="0 0 16 16"><rect x="0" y="0" width="16" height="16" fill="#0d5076"/><rect x="1" y="1" width="14" height="14" fill="url(#gCy)"/><path d="M8 2.5 V13.5 M2.5 8 H13.5" stroke="#0d4a70" stroke-width="1"/><path d="M8 1 L10.5 4 H5.5 Z M8 15 L10.5 12 H5.5 Z M1 8 L4 5.5 V10.5 Z M15 8 L12 5.5 V10.5 Z" fill="#0d4a70"/><rect x="6.5" y="6.5" width="3" height="3" fill="#6ad4f3"/></svg>
<svg style="position:absolute;left:414px;top:998px;" width="16" height="14" viewBox="0 0 16 14"><polygon points="0.6,7 6,0.8 15.2,0.8 15.2,13.2 6,13.2" fill="url(#gCy)" stroke="#0d5076" stroke-width="1"/></svg>
<svg style="position:absolute;left:438px;top:998px;" width="16" height="14" viewBox="0 0 16 14"><polygon points="15.4,7 10,0.8 0.8,0.8 0.8,13.2 10,13.2" fill="url(#gCy)" stroke="#0d5076" stroke-width="1"/></svg>
<div style="position:absolute;left:477px;top:993px;width:24px;height:24px;background:#3d3d3d;border:1px solid #565656;border-radius:3px"></div>
<svg style="position:absolute;left:481px;top:997px;" width="16" height="16" viewBox="0 0 16 16"><rect x="11.3" y="0.4" width="4.4" height="4.2" fill="#e6d6b6" stroke="#7d6c50" stroke-width="0.4"/><rect x="11.3" y="5.6" width="4.4" height="4.2" fill="#e6d6b6" stroke="#7d6c50" stroke-width="0.4"/><rect x="0.5" y="10.9" width="4.4" height="4.2" fill="#e6d6b6" stroke="#7d6c50" stroke-width="0.4"/><rect x="5.9" y="10.9" width="4.4" height="4.2" fill="#e6d6b6" stroke="#7d6c50" stroke-width="0.4"/><rect x="11.3" y="10.9" width="4.4" height="4.2" fill="#e6d6b6" stroke="#7d6c50" stroke-width="0.4"/><rect x="0.4" y="0.4" width="10.4" height="10.2" fill="#f7b4c0" stroke="#9c1848" stroke-width="0.9"/><text x="5.6" y="15.2" font-size="17" font-weight="bold" text-anchor="middle" font-family="Liberation Sans, sans-serif" fill="#9c1848">*</text></svg>
<div style="position:absolute;left:504px;top:993px;width:24px;height:24px;background:#3d3d3d;border:1px solid #565656;border-radius:3px"></div>
<svg style="position:absolute;left:508px;top:997px;" width="16" height="16" viewBox="0 0 16 16"><rect x="11.3" y="0.4" width="4.4" height="4.2" fill="#e6d6b6" stroke="#7d6c50" stroke-width="0.4"/><rect x="11.3" y="5.6" width="4.4" height="4.2" fill="#e6d6b6" stroke="#7d6c50" stroke-width="0.4"/><rect x="0.5" y="10.9" width="4.4" height="4.2" fill="#e6d6b6" stroke="#7d6c50" stroke-width="0.4"/><rect x="5.9" y="10.9" width="4.4" height="4.2" fill="#e6d6b6" stroke="#7d6c50" stroke-width="0.4"/><rect x="11.3" y="10.9" width="4.4" height="4.2" fill="#e6d6b6" stroke="#7d6c50" stroke-width="0.4"/><rect x="0.4" y="0.4" width="10.4" height="10.2" fill="#c5c2f6" stroke="#2419b4" stroke-width="0.9"/><text x="5.6" y="9" font-size="9.5" font-weight="bold" text-anchor="middle" font-family="Liberation Sans, sans-serif" fill="#2419b4">E</text></svg>
<div style="position:absolute;left:531px;top:993px;width:24px;height:24px;background:#3d3d3d;border:1px solid #565656;border-radius:3px"></div>
<svg style="position:absolute;left:535px;top:997px;" width="16" height="16" viewBox="0 0 16 16"><rect x="11.3" y="0.4" width="4.4" height="4.2" fill="#726c64" stroke="#5c5850" stroke-width="0.4"/><rect x="11.3" y="5.6" width="4.4" height="4.2" fill="#726c64" stroke="#5c5850" stroke-width="0.4"/><rect x="0.5" y="10.9" width="4.4" height="4.2" fill="#726c64" stroke="#5c5850" stroke-width="0.4"/><rect x="5.9" y="10.9" width="4.4" height="4.2" fill="#726c64" stroke="#5c5850" stroke-width="0.4"/><rect x="11.3" y="10.9" width="4.4" height="4.2" fill="#726c64" stroke="#5c5850" stroke-width="0.4"/><rect x="0.4" y="0.4" width="10.4" height="10.2" fill="#7c7c7c" stroke="#6e6e6e" stroke-width="0.9"/><circle cx="5.6" cy="5.5" r="1.5" fill="none" stroke="#2e2e2e" stroke-width="0.8"/><path d="M5.6 1.6 V3 M5.6 8 V9.4 M1.7 5.5 H3.1 M8.1 5.5 H9.5 M2.9 2.8 L3.8 3.7 M7.4 7.3 L8.3 8.2 M8.3 2.8 L7.4 3.7 M3.8 7.3 L2.9 8.2" stroke="#2e2e2e" stroke-width="0.7"/></svg>
<div style="position:absolute;left:571px;top:993px;width:24px;height:24px;background:#3d3d3d;border:1px solid #565656;border-radius:3px"></div>
<svg style="position:absolute;left:574px;top:996px;" width="17" height="17" viewBox="0 0 17 17"><rect x="4.6" y="0.5" width="11.6" height="11.6" fill="#4e7080" stroke="#3a5868" stroke-width="0.6"/><rect x="3" y="2" width="11.6" height="11.6" fill="#567888" stroke="#3a5868" stroke-width="0.6"/><rect x="1.6" y="3.4" width="11.6" height="11.6" fill="#5e8292" stroke="#3a5868" stroke-width="0.6"/><rect x="0.3" y="4.8" width="11.8" height="11.8" fill="#4a6c7c"/><rect x="1" y="5.5" width="4.9" height="4.9" fill="#6a8e9e"/><rect x="6.6" y="5.5" width="4.9" height="4.9" fill="#6a8e9e"/><rect x="1" y="11.1" width="4.9" height="4.9" fill="#62869a"/><rect x="6.6" y="11.1" width="4.9" height="4.9" fill="#62869a"/></svg>
<div style="position:absolute;left:601px;top:993px;width:24px;height:24px;background:#3d3d3d;border:1px solid #565656;border-radius:3px"></div>
<svg style="position:absolute;left:605px;top:998px;" width="16" height="14" viewBox="0 0 16 14"><rect x="0.5" y="0.5" width="15" height="13" fill="#f4f1c8" stroke="#8a8870" stroke-width="1"/><rect x="2" y="2.4" width="6" height="1.4" fill="#222"/><rect x="2" y="5" width="6" height="1.4" fill="#222"/><rect x="9" y="2.2" width="5" height="6" fill="#333"/><rect x="2" y="9.4" width="12" height="1.4" fill="#b8b59a"/></svg>
<div style="position:absolute;left:631px;top:993px;width:24px;height:24px;background:#3d3d3d;border:1px solid #565656;border-radius:3px"></div>
<svg style="position:absolute;left:635px;top:997px;" width="16" height="16" viewBox="0 0 16 16"><rect x="0.5" y="0.5" width="15" height="15" rx="1.5" fill="#1f6fd8" stroke="#0c3f94" stroke-width="1"/><rect x="3" y="1" width="10" height="6" fill="#e8f2ff"/><rect x="3.4" y="9.4" width="9.2" height="5" fill="#c9d4e4"/><rect x="4.4" y="10.8" width="7.2" height="1" fill="#8a96a8"/></svg>
<div style="position:absolute;left:661px;top:993px;width:24px;height:24px;background:#3d3d3d;border:1px solid #565656;border-radius:3px"></div>
<svg style="position:absolute;left:667px;top:996px;" width="12" height="18" viewBox="0 0 12 18"><rect x="1.5" y="0.5" width="9" height="10" rx="1" fill="#3a68a8" stroke="#1c3c70" stroke-width="0.8"/><rect x="6" y="1" width="4" height="6" fill="#274c86"/><path d="M1 8.4 C1 13.4 11 13.4 11 8.4 V7 H1 Z" fill="#a9c4dc"/><rect x="5.2" y="12" width="1.6" height="3.6" fill="#a9c4dc"/><rect x="2.4" y="15.4" width="7.2" height="1.4" fill="#a9c4dc"/></svg>
<div style="position:absolute;left:691px;top:993px;width:24px;height:24px;background:#3d3d3d;border:1px solid #565656;border-radius:3px"></div>
<svg style="position:absolute;left:695px;top:999px;" width="16" height="12" viewBox="0 0 16 12"><rect x="0.5" y="4" width="14.6" height="7" rx="1" fill="#585858"/><circle cx="11.4" cy="7.5" r="2" fill="#474747"/><rect x="2" y="6" width="1.3" height="1.2" fill="#474747"/><rect x="4.2" y="6" width="1.3" height="1.2" fill="#474747"/><rect x="6.4" y="6" width="1.3" height="1.2" fill="#474747"/><path d="M10 1 C13 1 14.6 2.6 14.8 4" stroke="#585858" stroke-width="1.2" fill="none"/></svg>
<div style="position:absolute;left:721px;top:993px;width:24px;height:24px;background:#3d3d3d;border:1px solid #565656;border-radius:3px"></div>
<svg style="position:absolute;left:726px;top:997.5px;" width="14" height="14" viewBox="0 0 14 14"><circle cx="7" cy="7" r="6.2" fill="#6a3a48" stroke="#86606a" stroke-width="0.9"/></svg>
<div style="position:absolute;left:763px;top:993px;width:24px;height:24px;background:#3d3d3d;border:1px solid #565656;border-radius:3px"></div>
<svg style="position:absolute;left:767px;top:997px;" width="17" height="16" viewBox="0 0 17 16"><rect x="0.9" y="2" width="13" height="13" fill="#d9d9d9"/><rect x="2.4" y="5" width="1.1" height="1.1" fill="#333"/><rect x="2.4" y="7.6" width="1.1" height="1.1" fill="#333"/><rect x="2.4" y="10.2" width="1.1" height="1.1" fill="#333"/><rect x="2.4" y="12.4" width="9.6" height="1" fill="#333"/><rect x="5.8" y="0.7" width="9.6" height="9.2" fill="#f4f4f4" stroke="#2a2a2a" stroke-width="0.8"/><text x="10.6" y="8.6" font-size="9.5" font-weight="bold" text-anchor="middle" font-family="Liberation Serif, serif" fill="#111">T</text></svg>
<div style="position:absolute;left:793px;top:993px;width:24px;height:24px;background:#3d3d3d;border:1px solid #565656;border-radius:3px"></div>
<svg style="position:absolute;left:796px;top:996px;" width="20" height="18" viewBox="0 0 20 18"><defs><linearGradient id="gIE" x1="0" y1="0" x2="0" y2="1"><stop offset="0" stop-color="#52d2fa"/><stop offset="1" stop-color="#1a98e2"/></linearGradient></defs><path d="M16.4 9.9 H6.6 a3.6 3.6 0 0 0 6.7 1.5 h2.7 a6.3 6.3 0 1 1 0.4 -1.5 Z M6.7 7.7 h6.6 a3.3 3.3 0 0 0 -6.6 0 Z" fill="url(#gIE)" fill-rule="evenodd"/><path d="M3.4 14.4 C-1 11 8 0.6 15.8 3.4 C10 2.6 2.6 9 3.4 14.4 Z" fill="#f2b818"/><path d="M15.8 3.4 C17.4 4 17.2 5.6 16.2 6.6" stroke="#f2b818" stroke-width="1.1" fill="none"/></svg>
</body></html>
